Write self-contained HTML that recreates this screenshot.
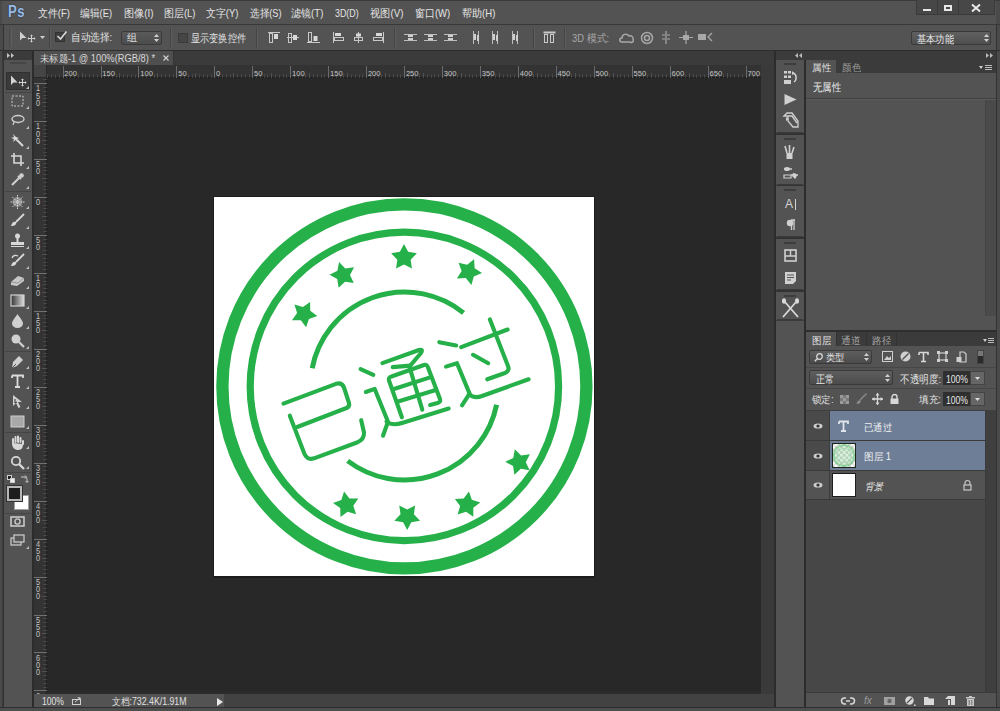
<!DOCTYPE html>
<html><head><meta charset="utf-8">
<style>
*{box-sizing:border-box}
html,body{margin:0;padding:0}
body{width:1000px;height:711px;overflow:hidden;background:#535353;position:relative;font-family:"Liberation Sans",sans-serif;color:#e6e6e6;font-size:11px}
.a{position:absolute}
.t{position:absolute;white-space:nowrap;line-height:1}
svg{overflow:visible}
</style></head><body>
<div class="a" style="left:0px;top:0px;width:1000px;height:711px;background:#4a4a4a;"></div>
<div class="a" style="left:996px;top:25px;width:1px;height:686px;background:#333;"></div>
<div class="a" style="left:2px;top:1px;width:994px;height:23px;background:#535353;"></div>
<div class="a" style="left:0px;top:0px;width:1000px;height:1px;background:#3a3a3a;"></div>
<div class="a" style="left:0px;top:24px;width:1000px;height:1px;background:#383838;"></div>
<div class="t" style="left:8.2px;top:4.2px;font-size:16px;color:#9ab9e2;transform:scaleX(0.8180);transform-origin:0 0;font-weight:bold;text-shadow:0 0 1.2px #1f3656,0 0 1px #1f3656;letter-spacing:0.6px">Ps</div>
<div class="t" style="left:38px;top:8px;font-size:10.5px;color:#e4e4e4;transform:scaleX(0.9034);transform-origin:0 0;">文件(F)</div>
<div class="t" style="left:80px;top:8px;font-size:10.5px;color:#e4e4e4;transform:scaleX(0.8889);transform-origin:0 0;">编辑(E)</div>
<div class="t" style="left:123.5px;top:8px;font-size:10.5px;color:#e4e4e4;transform:scaleX(0.9241);transform-origin:0 0;">图像(I)</div>
<div class="t" style="left:163.5px;top:8px;font-size:10.5px;color:#e4e4e4;transform:scaleX(0.9040);transform-origin:0 0;">图层(L)</div>
<div class="t" style="left:205.5px;top:8px;font-size:10.5px;color:#e4e4e4;transform:scaleX(0.9028);transform-origin:0 0;">文字(Y)</div>
<div class="t" style="left:249.5px;top:8px;font-size:10.5px;color:#e4e4e4;transform:scaleX(0.8750);transform-origin:0 0;">选择(S)</div>
<div class="t" style="left:291px;top:8px;font-size:10.5px;color:#e4e4e4;transform:scaleX(0.9147);transform-origin:0 0;">滤镜(T)</div>
<div class="t" style="left:335px;top:8px;font-size:10.5px;color:#e4e4e4;transform:scaleX(0.8429);transform-origin:0 0;">3D(D)</div>
<div class="t" style="left:370.3px;top:8px;font-size:10.5px;color:#e4e4e4;transform:scaleX(0.9278);transform-origin:0 0;">视图(V)</div>
<div class="t" style="left:415.4px;top:8px;font-size:10.5px;color:#e4e4e4;transform:scaleX(0.9047);transform-origin:0 0;">窗口(W)</div>
<div class="t" style="left:461.6px;top:8px;font-size:10.5px;color:#e4e4e4;transform:scaleX(0.9131);transform-origin:0 0;">帮助(H)</div>
<div class="a" style="left:916px;top:0px;width:79px;height:15px;background:#474747;border:1px solid #3a3a3a;border-top:none"></div>
<div class="a" style="left:937px;top:0px;width:1px;height:14px;background:#3a3a3a;"></div>
<div class="a" style="left:958px;top:0px;width:1px;height:14px;background:#3a3a3a;"></div>
<div class="a" style="left:923px;top:9px;width:8px;height:2px;background:#e8e8e8;"></div>
<div class="a" style="left:944px;top:5px;width:8px;height:6px;background:transparent;border:2px solid #e8e8e8"></div>
<svg class="a" style="left:971px;top:4px;" width="10" height="8" viewBox="0 0 10 8"><path d="M1 0.5 L9 7.5 M9 0.5 L1 7.5" stroke="#e8e8e8" stroke-width="2"/></svg>
<div class="a" style="left:4px;top:25px;width:992px;height:25px;background:#535353;"></div>
<div class="a" style="left:0px;top:50px;width:1000px;height:1px;background:#2e2e2e;"></div>
<div class="a" style="left:9px;top:29px;width:1px;height:18px;background:#484848;"></div>
<div class="a" style="left:11px;top:29px;width:1px;height:18px;background:#5e5e5e;"></div>
<svg class="a" style="left:19px;top:31px;" width="17" height="12" viewBox="0 0 17 12"><path d="M1 0.5 L1 9.5 L3.5 7 L7.5 7 Z" fill="#d0d0d0"/><path d="M9.5 7.5 H15.5 M12.5 4.5 V10.5" stroke="#d0d0d0" stroke-width="1"/><path d="M12.5 3.5 L11 5 H14Z M12.5 11.5 L11 10 H14Z M8.5 7.5 L10 6 V9Z M16.5 7.5 L15 6 V9Z" fill="#d0d0d0"/></svg>
<svg class="a" style="left:40px;top:36px;" width="6" height="3" viewBox="0 0 6 3"><path d="M0 0 H5 L2.5 3Z" fill="#cfcfcf"/></svg>
<div class="a" style="left:49px;top:28px;width:1px;height:20px;background:#444;"></div>
<div class="a" style="left:50px;top:28px;width:1px;height:20px;background:#5e5e5e;"></div>
<div class="a" style="left:55px;top:32px;width:10px;height:10px;background:#3e3e3e;border:1px solid #333"></div>
<svg class="a" style="left:56px;top:30px;" width="12" height="11" viewBox="0 0 12 11"><path d="M1.5 6 L4.5 9 L10.5 1.5" stroke="#d8d8d8" stroke-width="1.6" fill="none"/></svg>
<div class="t" style="left:70.5px;top:32px;font-size:10.5px;color:#e0e0e0;transform:scaleX(0.8738);transform-origin:0 0;">自动选择:</div>
<div class="a" style="left:121px;top:31px;width:41px;height:14px;background:#4f4f4f;border:1px solid #3a3a3a;border-radius:2px;background:linear-gradient(#5a5a5a,#4c4c4c)"></div>
<div class="t" style="left:126.5px;top:33px;font-size:10px;color:#e0e0e0;">组</div>
<svg class="a" style="left:154px;top:34px;" width="5" height="8" viewBox="0 0 5 8"><path d="M0 3 L2.5 0 L5 3Z M0 5 L2.5 8 L5 5Z" fill="#d0d0d0"/></svg>
<div class="a" style="left:170px;top:28px;width:1px;height:20px;background:#444;"></div>
<div class="a" style="left:171px;top:28px;width:1px;height:20px;background:#5e5e5e;"></div>
<div class="a" style="left:178px;top:33px;width:10px;height:10px;background:#464646;border:1px solid #3a3a3a"></div>
<div class="t" style="left:191.2px;top:32.5px;font-size:10.5px;color:#e0e0e0;transform:scaleX(0.8333);transform-origin:0 0;">显示变换控件</div>
<div class="a" style="left:256px;top:28px;width:1px;height:20px;background:#444;"></div>
<div class="a" style="left:257px;top:28px;width:1px;height:20px;background:#5e5e5e;"></div>
<svg class="a" style="left:268px;top:32px;" width="13" height="11" viewBox="0 0 13 11"><path d="M0 0.5 H12" stroke="#c8c8c8"/><rect x="1.5" y="1.5" width="3" height="9" fill="none" stroke="#c8c8c8"/><rect x="6" y="2" width="4" height="5" fill="#d8d8d8"/></svg>
<svg class="a" style="left:287px;top:32px;" width="13" height="11" viewBox="0 0 13 11"><path d="M0 5.5 H12" stroke="#c8c8c8"/><rect x="1.5" y="1.5" width="3" height="9" fill="none" stroke="#c8c8c8"/><rect x="6" y="3" width="4" height="5" fill="#d8d8d8"/></svg>
<svg class="a" style="left:307px;top:32px;" width="13" height="11" viewBox="0 0 13 11"><path d="M0 10.5 H13" stroke="#c8c8c8"/><rect x="1.5" y="0.5" width="3" height="9" fill="none" stroke="#c8c8c8"/><rect x="6.5" y="4" width="4" height="5" fill="#d8d8d8"/></svg>
<svg class="a" style="left:333px;top:32px;" width="13" height="11" viewBox="0 0 13 11"><path d="M0.5 0 V11" stroke="#c8c8c8"/><rect x="1.5" y="5.5" width="9" height="3" fill="none" stroke="#c8c8c8"/><rect x="2" y="1" width="6" height="3" fill="#d8d8d8"/></svg>
<svg class="a" style="left:353px;top:32px;" width="13" height="11" viewBox="0 0 13 11"><path d="M5.5 0 V11" stroke="#c8c8c8"/><rect x="1.5" y="5.5" width="8" height="3" fill="none" stroke="#c8c8c8"/><rect x="3" y="1.5" width="5" height="3" fill="#d8d8d8"/></svg>
<svg class="a" style="left:373px;top:32px;" width="13" height="11" viewBox="0 0 13 11"><path d="M10.5 0 V11" stroke="#c8c8c8"/><rect x="0.5" y="5.5" width="9" height="3" fill="none" stroke="#c8c8c8"/><rect x="3" y="1" width="6" height="3" fill="#d8d8d8"/></svg>
<div class="a" style="left:394px;top:28px;width:1px;height:20px;background:#444;"></div>
<div class="a" style="left:395px;top:28px;width:1px;height:20px;background:#5e5e5e;"></div>
<svg class="a" style="left:404px;top:32px;" width="13" height="11" viewBox="0 0 13 11"><path d="M0 2.5 H13 M0 8.5 H13" stroke="#bdbdbd"/><rect x="4" y="3" width="5" height="2" fill="#d0d0d0"/><rect x="4" y="6" width="5" height="2" fill="#d0d0d0"/></svg>
<svg class="a" style="left:424px;top:32px;" width="13" height="11" viewBox="0 0 13 11"><path d="M0 2.5 H13 M0 8.5 H13" stroke="#bdbdbd"/><rect x="4" y="3" width="5" height="2" fill="#d0d0d0"/><rect x="4" y="6" width="5" height="2" fill="#d0d0d0"/></svg>
<svg class="a" style="left:444px;top:32px;" width="13" height="11" viewBox="0 0 13 11"><path d="M0 2.5 H13 M0 8.5 H13" stroke="#bdbdbd"/><rect x="4" y="3" width="5" height="2" fill="#d0d0d0"/><rect x="4" y="6" width="5" height="2" fill="#d0d0d0"/></svg>
<svg class="a" style="left:471px;top:31px;" width="10" height="13" viewBox="0 0 10 13"><path d="M2.5 0 V13 M7.5 0 V13" stroke="#bdbdbd"/><rect x="3" y="3" width="2" height="6" fill="#d0d0d0"/><rect x="6" y="4" width="2" height="6" fill="#d0d0d0"/></svg>
<svg class="a" style="left:490px;top:31px;" width="10" height="13" viewBox="0 0 10 13"><path d="M2.5 0 V13 M7.5 0 V13" stroke="#bdbdbd"/><rect x="3" y="3" width="2" height="6" fill="#d0d0d0"/><rect x="6" y="4" width="2" height="6" fill="#d0d0d0"/></svg>
<svg class="a" style="left:510px;top:31px;" width="10" height="13" viewBox="0 0 10 13"><path d="M2.5 0 V13 M7.5 0 V13" stroke="#bdbdbd"/><rect x="3" y="3" width="2" height="6" fill="#d0d0d0"/><rect x="6" y="4" width="2" height="6" fill="#d0d0d0"/></svg>
<div class="a" style="left:533px;top:28px;width:1px;height:20px;background:#444;"></div>
<div class="a" style="left:534px;top:28px;width:1px;height:20px;background:#5e5e5e;"></div>
<svg class="a" style="left:543px;top:31px;" width="13" height="13" viewBox="0 0 13 13"><rect x="0.5" y="0.5" width="12" height="2" fill="#c8c8c8"/><rect x="1.5" y="3.5" width="3" height="8" fill="none" stroke="#c8c8c8"/><rect x="7.5" y="3.5" width="3" height="8" fill="none" stroke="#c8c8c8"/></svg>
<div class="a" style="left:564px;top:28px;width:1px;height:20px;background:#444;"></div>
<div class="a" style="left:565px;top:28px;width:1px;height:20px;background:#5e5e5e;"></div>
<div class="t" style="left:571.5px;top:33px;font-size:10.5px;color:#a8a8a8;transform:scaleX(0.8966);transform-origin:0 0;">3D 模式:</div>
<svg class="a" style="left:619px;top:31px;" width="16" height="13" viewBox="0 0 16 13"><path d="M3 11 C0 11 0 7 3 7 C3 3 8 2 10 5 C13 4 15 7 14 9 C15 11 13 12 11 11 Z" fill="none" stroke="#a8a8a8" stroke-width="1.5"/></svg>
<svg class="a" style="left:640px;top:31px;" width="14" height="14" viewBox="0 0 14 14"><circle cx="7" cy="7" r="5.5" fill="none" stroke="#a8a8a8" stroke-width="1.5"/><circle cx="7" cy="7" r="2.5" fill="none" stroke="#a8a8a8" stroke-width="1.5"/></svg>
<svg class="a" style="left:661px;top:31px;" width="10" height="13" viewBox="0 0 10 13"><path d="M5 0 V13 M1 4 H4 M6 4 H9 M1 8 H4 M6 8 H9" stroke="#a8a8a8" stroke-width="1.2"/></svg>
<svg class="a" style="left:679px;top:31px;" width="14" height="13" viewBox="0 0 14 13"><path d="M7 0 V13 M0 6.5 H14" stroke="#a8a8a8" stroke-width="1.2"/><rect x="4" y="4" width="6" height="5" fill="#a8a8a8"/></svg>
<svg class="a" style="left:698px;top:32px;" width="16" height="11" viewBox="0 0 16 11"><rect x="0" y="2" width="8" height="6" fill="#a8a8a8"/><path d="M14 1 L10 5 L14 9" fill="none" stroke="#a8a8a8" stroke-width="1.3"/></svg>
<div class="a" style="left:911px;top:31px;width:80px;height:14px;background:#5a5a5a;border:1px solid #393939;border-radius:2px;background:linear-gradient(#606060,#4e4e4e)"></div>
<div class="t" style="left:917px;top:33.5px;font-size:10.5px;color:#e6e6e6;transform:scaleX(0.8409);transform-origin:0 0;">基本功能</div>
<svg class="a" style="left:984px;top:34px;" width="5" height="8" viewBox="0 0 5 8"><path d="M0 3 L2.5 0 L5 3Z M0 5 L2.5 8 L5 5Z" fill="#d0d0d0"/></svg>
<div class="a" style="left:2px;top:51px;width:30px;height:657px;background:#3b3b3b;"></div>
<div class="a" style="left:4px;top:60px;width:28px;height:647px;background:#535353;"></div>
<div class="a" style="left:32px;top:51px;width:2px;height:657px;background:#2c2c2c;"></div>
<div class="a" style="left:3px;top:25px;width:1px;height:686px;background:#333;"></div>
<svg class="a" style="left:6.5px;top:53px;" width="9" height="5" viewBox="0 0 9 5"><path d="M0 0 L3 2.5 L0 5Z M4 0 L7 2.5 L4 5Z" fill="#c4c4c4"/></svg>
<div class="a" style="left:10px;top:62px;width:16px;height:2px;background:#464646;"></div>
<div class="a" style="left:6px;top:72px;width:24px;height:18px;background:#3a3a3a;border:1px solid #303030"></div>
<svg class="a" style="left:10px;top:75px;" width="16" height="13" viewBox="0 0 16 13"><path d="M1 0.5 L1 10 L3.5 7.5 L7.5 7.5 Z" fill="#d4d4d4"/><path d="M9.5 7.5 H15.5 M12.5 4.5 V10.5" stroke="#d4d4d4" stroke-width="1"/><path d="M12.5 3.5 L11 5 H14Z M12.5 11.5 L11 10 H14Z M8.5 7.5 L10 6 V9Z M16.5 7.5 L15 6 V9Z" fill="#d4d4d4"/></svg>
<svg class="a" style="left:26px;top:86px;" width="3" height="3" viewBox="0 0 3 3"><path d="M3 0 V3 H0Z" fill="#bdbdbd"/></svg>
<div class="a" style="left:5px;top:92px;width:26px;height:1px;background:#444;"></div>
<svg class="a" style="left:11px;top:95px;" width="13" height="12" viewBox="0 0 13 12"><rect x="1" y="1" width="11" height="10" fill="none" stroke="#cfcfcf" stroke-dasharray="2 1.5"/></svg>
<svg class="a" style="left:26px;top:106px;" width="3" height="3" viewBox="0 0 3 3"><path d="M3 0 V3 H0Z" fill="#bdbdbd"/></svg>
<svg class="a" style="left:10px;top:114px;" width="15" height="12" viewBox="0 0 15 12"><ellipse cx="8" cy="5" rx="6" ry="3.5" fill="none" stroke="#cfcfcf" stroke-width="1.4"/><path d="M4 8 L3 11" stroke="#cfcfcf" stroke-width="1.2"/></svg>
<svg class="a" style="left:26px;top:126px;" width="3" height="3" viewBox="0 0 3 3"><path d="M3 0 V3 H0Z" fill="#bdbdbd"/></svg>
<svg class="a" style="left:10px;top:133px;" width="15" height="15" viewBox="0 0 15 15"><path d="M3 1 L4 4 L1 5 L4 6 L3 9 L5.5 7 L8 9 L7 6 L9 5 L6 4Z" fill="#d8d8d8"/><path d="M7 7 L13 13" stroke="#d8d8d8" stroke-width="2"/></svg>
<svg class="a" style="left:26px;top:146px;" width="3" height="3" viewBox="0 0 3 3"><path d="M3 0 V3 H0Z" fill="#bdbdbd"/></svg>
<svg class="a" style="left:11px;top:153px;" width="14" height="14" viewBox="0 0 14 14"><path d="M3 0 V10 H13 M0 3 H10 V13" fill="none" stroke="#d8d8d8" stroke-width="1.6"/></svg>
<svg class="a" style="left:26px;top:166px;" width="3" height="3" viewBox="0 0 3 3"><path d="M3 0 V3 H0Z" fill="#bdbdbd"/></svg>
<svg class="a" style="left:10px;top:172px;" width="15" height="15" viewBox="0 0 15 15"><path d="M2 13 L9 6 M8 4 L11 7" stroke="#d0d0d0" stroke-width="2"/><circle cx="11.5" cy="3.5" r="2.3" fill="#d0d0d0"/></svg>
<svg class="a" style="left:26px;top:186px;" width="3" height="3" viewBox="0 0 3 3"><path d="M3 0 V3 H0Z" fill="#bdbdbd"/></svg>
<div class="a" style="left:5px;top:191px;width:26px;height:1px;background:#444;"></div>
<svg class="a" style="left:10px;top:195px;" width="15" height="14" viewBox="0 0 15 14"><circle cx="7.5" cy="7" r="5" fill="#909090"/><path d="M7.5 0 V14 M0.5 7 H14.5 M2.5 2 L12.5 12 M12.5 2 L2.5 12" stroke="#d8d8d8" stroke-width="1" stroke-dasharray="1.5 1"/></svg>
<svg class="a" style="left:26px;top:206px;" width="3" height="3" viewBox="0 0 3 3"><path d="M3 0 V3 H0Z" fill="#bdbdbd"/></svg>
<svg class="a" style="left:10px;top:213px;" width="15" height="14" viewBox="0 0 15 14"><path d="M14 1 L6 9" stroke="#d8d8d8" stroke-width="1.8"/><path d="M1 13 C2 9 4 8 6 9 C7 11 5 13 1 13Z" fill="#d8d8d8"/></svg>
<svg class="a" style="left:26px;top:226px;" width="3" height="3" viewBox="0 0 3 3"><path d="M3 0 V3 H0Z" fill="#bdbdbd"/></svg>
<svg class="a" style="left:10px;top:233px;" width="15" height="15" viewBox="0 0 15 15"><circle cx="7.5" cy="3" r="2.5" fill="#d8d8d8"/><rect x="6.5" y="4" width="2" height="5" fill="#d8d8d8"/><rect x="1" y="9" width="13" height="3" fill="#d8d8d8"/><rect x="1" y="13" width="13" height="1" fill="#d8d8d8"/></svg>
<svg class="a" style="left:26px;top:246px;" width="3" height="3" viewBox="0 0 3 3"><path d="M3 0 V3 H0Z" fill="#bdbdbd"/></svg>
<svg class="a" style="left:10px;top:253px;" width="15" height="15" viewBox="0 0 15 15"><path d="M14 1 L6 9" stroke="#d8d8d8" stroke-width="1.8"/><path d="M1 13 C2 9 4 8 6 9 C7 11 5 13 1 13Z" fill="#d8d8d8"/><path d="M2 5 C3 2 6 2 8 3" fill="none" stroke="#d8d8d8" stroke-width="1.3"/></svg>
<svg class="a" style="left:26px;top:266px;" width="3" height="3" viewBox="0 0 3 3"><path d="M3 0 V3 H0Z" fill="#bdbdbd"/></svg>
<svg class="a" style="left:10px;top:274px;" width="15" height="13" viewBox="0 0 15 13"><path d="M1 8 L8 2 L14 4 L14 7 L7 12 L1 11Z" fill="#c8c8c8"/><path d="M1 8 L8 9 L14 4" fill="none" stroke="#888" stroke-width="0.8"/></svg>
<svg class="a" style="left:26px;top:286px;" width="3" height="3" viewBox="0 0 3 3"><path d="M3 0 V3 H0Z" fill="#bdbdbd"/></svg>
<svg class="a" style="left:10px;top:294px;" width="15" height="13" viewBox="0 0 15 13"><defs><linearGradient id="gg" x1="0" x2="1"><stop offset="0" stop-color="#333"/><stop offset="1" stop-color="#ddd"/></linearGradient></defs><rect x="1" y="1" width="13" height="11" fill="url(#gg)" stroke="#d0d0d0" stroke-width="1.2"/></svg>
<svg class="a" style="left:26px;top:306px;" width="3" height="3" viewBox="0 0 3 3"><path d="M3 0 V3 H0Z" fill="#bdbdbd"/></svg>
<svg class="a" style="left:11px;top:313px;" width="13" height="15" viewBox="0 0 13 15"><path d="M6.5 1 C9 5 12 8 12 10.5 A5.5 4.5 0 0 1 1 10.5 C1 8 4 5 6.5 1Z" fill="#d0d0d0"/></svg>
<svg class="a" style="left:26px;top:326px;" width="3" height="3" viewBox="0 0 3 3"><path d="M3 0 V3 H0Z" fill="#bdbdbd"/></svg>
<svg class="a" style="left:10px;top:333px;" width="15" height="15" viewBox="0 0 15 15"><circle cx="6" cy="6" r="4.5" fill="#d0d0d0"/><path d="M9 9 L14 14" stroke="#d0d0d0" stroke-width="2.2"/></svg>
<svg class="a" style="left:26px;top:346px;" width="3" height="3" viewBox="0 0 3 3"><path d="M3 0 V3 H0Z" fill="#bdbdbd"/></svg>
<div class="a" style="left:5px;top:351px;width:26px;height:1px;background:#444;"></div>
<svg class="a" style="left:10px;top:354px;" width="15" height="15" viewBox="0 0 15 15"><path d="M2 14 L3 8 L9 2 L13 6 L7 12Z" fill="#d0d0d0"/><path d="M2 14 L6 10" stroke="#555" stroke-width="1"/></svg>
<svg class="a" style="left:26px;top:366px;" width="3" height="3" viewBox="0 0 3 3"><path d="M3 0 V3 H0Z" fill="#bdbdbd"/></svg>
<svg class="a" style="left:11px;top:374px;" width="13" height="14" viewBox="0 0 13 14"><path d="M1 1.5 H12 V4 M1 1.5 V4 M6.5 1.5 V13 M4 13 H9" fill="none" stroke="#dcdcdc" stroke-width="1.8"/></svg>
<svg class="a" style="left:26px;top:386px;" width="3" height="3" viewBox="0 0 3 3"><path d="M3 0 V3 H0Z" fill="#bdbdbd"/></svg>
<svg class="a" style="left:11px;top:394px;" width="13" height="15" viewBox="0 0 13 15"><path d="M2 1 L2 12 L5 9 L7.5 14 L9.5 13 L7 8 L11 8Z" fill="#d0d0d0"/><path d="M4 5 L4 9 L6 8" stroke="#333" stroke-width="1" fill="none"/></svg>
<svg class="a" style="left:26px;top:406px;" width="3" height="3" viewBox="0 0 3 3"><path d="M3 0 V3 H0Z" fill="#bdbdbd"/></svg>
<svg class="a" style="left:10px;top:415px;" width="15" height="13" viewBox="0 0 15 13"><rect x="1" y="1" width="13" height="11" fill="#a8a8a8" stroke="#d0d0d0" stroke-width="1"/></svg>
<svg class="a" style="left:26px;top:426px;" width="3" height="3" viewBox="0 0 3 3"><path d="M3 0 V3 H0Z" fill="#bdbdbd"/></svg>
<div class="a" style="left:5px;top:432px;width:26px;height:1px;background:#444;"></div>
<svg class="a" style="left:10px;top:435px;" width="15" height="15" viewBox="0 0 15 15"><path d="M3 8 L3 4 M5.5 7 L5.5 2 M8 7 L8 1.5 M10.5 7 L10.5 3 M13 9 L13 6" stroke="#d8d8d8" stroke-width="2" stroke-linecap="round"/><path d="M2 8 C2 13 5 15 8 15 C12 15 13 12 13 9 L3 8Z" fill="#d8d8d8"/></svg>
<svg class="a" style="left:26px;top:446px;" width="3" height="3" viewBox="0 0 3 3"><path d="M3 0 V3 H0Z" fill="#bdbdbd"/></svg>
<svg class="a" style="left:10px;top:455px;" width="15" height="15" viewBox="0 0 15 15"><circle cx="6" cy="6" r="4.2" fill="none" stroke="#d8d8d8" stroke-width="1.8"/><path d="M9 9 L14 14" stroke="#d8d8d8" stroke-width="2.4"/></svg>
<svg class="a" style="left:26px;top:466px;" width="3" height="3" viewBox="0 0 3 3"><path d="M3 0 V3 H0Z" fill="#bdbdbd"/></svg>
<div class="a" style="left:5px;top:472px;width:26px;height:1px;background:#444;"></div>
<svg class="a" style="left:7px;top:475px;" width="8" height="8" viewBox="0 0 8 8"><rect x="0.5" y="0.5" width="4" height="4" fill="#222" stroke="#ccc"/><rect x="3.5" y="3.5" width="4" height="4" fill="#eee" stroke="#ccc"/></svg>
<svg class="a" style="left:20px;top:475px;" width="8" height="8" viewBox="0 0 8 8"><path d="M1 2 H5 C6.5 2 7 3 7 4.5 V7 M5 0.5 L6.5 2 L5 3.5 M5.5 6 L7 7.5 L8.5 6" fill="none" stroke="#ccc" stroke-width="1"/></svg>
<div class="a" style="left:14px;top:495px;width:15px;height:15px;background:#ffffff;border:1px solid #a0a0a0"></div>
<div class="a" style="left:7px;top:486px;width:15px;height:15px;background:#1e1e1e;border:2px solid #b8b8b8"></div>
<div class="a" style="left:6px;top:485px;width:17px;height:17px;background:transparent;border:1px solid #333"></div>
<div class="a" style="left:5px;top:513px;width:26px;height:1px;background:#444;"></div>
<svg class="a" style="left:10px;top:516px;" width="15" height="11" viewBox="0 0 15 11"><rect x="1" y="1" width="13" height="9" fill="none" stroke="#cfcfcf" stroke-width="1.5"/><circle cx="7.5" cy="5.5" r="2.6" fill="none" stroke="#cfcfcf" stroke-width="1.3"/></svg>
<svg class="a" style="left:10px;top:534px;" width="16" height="13" viewBox="0 0 16 13"><rect x="1" y="4" width="10" height="7" fill="#585858" stroke="#cfcfcf" stroke-width="1.2"/><rect x="4" y="1" width="10" height="7" fill="#585858" stroke="#cfcfcf" stroke-width="1.2"/></svg>
<svg class="a" style="left:26px;top:546px;" width="3" height="3" viewBox="0 0 3 3"><path d="M3 0 V3 H0Z" fill="#bdbdbd"/></svg>
<div class="a" style="left:34px;top:51px;width:740px;height:14px;background:#3b3b3b;"></div>
<div class="a" style="left:34px;top:51px;width:140px;height:14px;background:#4f4f4f;"></div>
<div class="a" style="left:173px;top:51px;width:1px;height:14px;background:#333;"></div>
<div class="t" style="left:40px;top:54px;font-size:10px;color:#d8d8d8;transform:scaleX(0.9311);transform-origin:0 0;">未标题-1 @ 100%(RGB/8) *</div>
<svg class="a" style="left:163px;top:55px;" width="6" height="6" viewBox="0 0 6 6"><path d="M0.5 0.5 L5.5 5.5 M5.5 0.5 L0.5 5.5" stroke="#cfcfcf" stroke-width="1.2"/></svg>
<div class="a" style="left:34px;top:65px;width:727px;height:13px;background:#333333;"></div>
<div class="a" style="left:34px;top:65px;width:13px;height:629px;background:#333333;"></div>
<div class="a" style="left:34px;top:65px;width:13px;height:13px;background:#454545;border-right:1px solid #2a2a2a;border-bottom:1px solid #2a2a2a"></div>
<div class="a" style="left:47px;top:77px;width:714px;height:1px;background:#1c1c1c;"></div>
<div class="a" style="left:46px;top:78px;width:1px;height:616px;background:#1c1c1c;"></div>
<div class="a" style="left:47.3px;top:74px;width:1px;height:4px;background:#464646"></div>
<div class="a" style="left:51.1px;top:74px;width:1px;height:4px;background:#464646"></div>
<div class="a" style="left:54.9px;top:74px;width:1px;height:4px;background:#464646"></div>
<div class="a" style="left:58.7px;top:74px;width:1px;height:4px;background:#464646"></div>
<div class="a" style="left:62.5px;top:66px;width:1px;height:12px;background:#6a6a6a"></div>
<div class="a" style="left:66.3px;top:74px;width:1px;height:4px;background:#464646"></div>
<div class="a" style="left:70.1px;top:74px;width:1px;height:4px;background:#464646"></div>
<div class="a" style="left:73.9px;top:74px;width:1px;height:4px;background:#464646"></div>
<div class="a" style="left:77.7px;top:74px;width:1px;height:4px;background:#464646"></div>
<div class="a" style="left:81.5px;top:73px;width:1px;height:5px;background:#505050"></div>
<div class="a" style="left:85.3px;top:74px;width:1px;height:4px;background:#464646"></div>
<div class="a" style="left:89.1px;top:74px;width:1px;height:4px;background:#464646"></div>
<div class="a" style="left:92.9px;top:74px;width:1px;height:4px;background:#464646"></div>
<div class="a" style="left:96.7px;top:74px;width:1px;height:4px;background:#464646"></div>
<div class="t" style="left:64.3px;top:70px;font-size:7.6px;color:#c4c4c4">200</div>
<div class="a" style="left:100.5px;top:66px;width:1px;height:12px;background:#6a6a6a"></div>
<div class="a" style="left:104.2px;top:74px;width:1px;height:4px;background:#464646"></div>
<div class="a" style="left:108.0px;top:74px;width:1px;height:4px;background:#464646"></div>
<div class="a" style="left:111.8px;top:74px;width:1px;height:4px;background:#464646"></div>
<div class="a" style="left:115.6px;top:74px;width:1px;height:4px;background:#464646"></div>
<div class="a" style="left:119.4px;top:73px;width:1px;height:5px;background:#505050"></div>
<div class="a" style="left:123.2px;top:74px;width:1px;height:4px;background:#464646"></div>
<div class="a" style="left:127.0px;top:74px;width:1px;height:4px;background:#464646"></div>
<div class="a" style="left:130.8px;top:74px;width:1px;height:4px;background:#464646"></div>
<div class="a" style="left:134.6px;top:74px;width:1px;height:4px;background:#464646"></div>
<div class="t" style="left:102.2px;top:70px;font-size:7.6px;color:#c4c4c4">150</div>
<div class="a" style="left:138.4px;top:66px;width:1px;height:12px;background:#6a6a6a"></div>
<div class="a" style="left:142.2px;top:74px;width:1px;height:4px;background:#464646"></div>
<div class="a" style="left:146.0px;top:74px;width:1px;height:4px;background:#464646"></div>
<div class="a" style="left:149.8px;top:74px;width:1px;height:4px;background:#464646"></div>
<div class="a" style="left:153.6px;top:74px;width:1px;height:4px;background:#464646"></div>
<div class="a" style="left:157.4px;top:73px;width:1px;height:5px;background:#505050"></div>
<div class="a" style="left:161.2px;top:74px;width:1px;height:4px;background:#464646"></div>
<div class="a" style="left:165.0px;top:74px;width:1px;height:4px;background:#464646"></div>
<div class="a" style="left:168.8px;top:74px;width:1px;height:4px;background:#464646"></div>
<div class="a" style="left:172.6px;top:74px;width:1px;height:4px;background:#464646"></div>
<div class="t" style="left:140.2px;top:70px;font-size:7.6px;color:#c4c4c4">100</div>
<div class="a" style="left:176.4px;top:66px;width:1px;height:12px;background:#6a6a6a"></div>
<div class="a" style="left:180.1px;top:74px;width:1px;height:4px;background:#464646"></div>
<div class="a" style="left:183.9px;top:74px;width:1px;height:4px;background:#464646"></div>
<div class="a" style="left:187.7px;top:74px;width:1px;height:4px;background:#464646"></div>
<div class="a" style="left:191.5px;top:74px;width:1px;height:4px;background:#464646"></div>
<div class="a" style="left:195.3px;top:73px;width:1px;height:5px;background:#505050"></div>
<div class="a" style="left:199.1px;top:74px;width:1px;height:4px;background:#464646"></div>
<div class="a" style="left:202.9px;top:74px;width:1px;height:4px;background:#464646"></div>
<div class="a" style="left:206.7px;top:74px;width:1px;height:4px;background:#464646"></div>
<div class="a" style="left:210.5px;top:74px;width:1px;height:4px;background:#464646"></div>
<div class="t" style="left:178.2px;top:70px;font-size:7.6px;color:#c4c4c4">50</div>
<div class="a" style="left:214.3px;top:66px;width:1px;height:12px;background:#6a6a6a"></div>
<div class="a" style="left:218.1px;top:74px;width:1px;height:4px;background:#464646"></div>
<div class="a" style="left:221.9px;top:74px;width:1px;height:4px;background:#464646"></div>
<div class="a" style="left:225.7px;top:74px;width:1px;height:4px;background:#464646"></div>
<div class="a" style="left:229.5px;top:74px;width:1px;height:4px;background:#464646"></div>
<div class="a" style="left:233.3px;top:73px;width:1px;height:5px;background:#505050"></div>
<div class="a" style="left:237.1px;top:74px;width:1px;height:4px;background:#464646"></div>
<div class="a" style="left:240.9px;top:74px;width:1px;height:4px;background:#464646"></div>
<div class="a" style="left:244.7px;top:74px;width:1px;height:4px;background:#464646"></div>
<div class="a" style="left:248.5px;top:74px;width:1px;height:4px;background:#464646"></div>
<div class="t" style="left:216.1px;top:70px;font-size:7.6px;color:#c4c4c4">0</div>
<div class="a" style="left:252.2px;top:66px;width:1px;height:12px;background:#6a6a6a"></div>
<div class="a" style="left:256.0px;top:74px;width:1px;height:4px;background:#464646"></div>
<div class="a" style="left:259.8px;top:74px;width:1px;height:4px;background:#464646"></div>
<div class="a" style="left:263.6px;top:74px;width:1px;height:4px;background:#464646"></div>
<div class="a" style="left:267.4px;top:74px;width:1px;height:4px;background:#464646"></div>
<div class="a" style="left:271.2px;top:73px;width:1px;height:5px;background:#505050"></div>
<div class="a" style="left:275.0px;top:74px;width:1px;height:4px;background:#464646"></div>
<div class="a" style="left:278.8px;top:74px;width:1px;height:4px;background:#464646"></div>
<div class="a" style="left:282.6px;top:74px;width:1px;height:4px;background:#464646"></div>
<div class="a" style="left:286.4px;top:74px;width:1px;height:4px;background:#464646"></div>
<div class="t" style="left:254.1px;top:70px;font-size:7.6px;color:#c4c4c4">50</div>
<div class="a" style="left:290.2px;top:66px;width:1px;height:12px;background:#6a6a6a"></div>
<div class="a" style="left:294.0px;top:74px;width:1px;height:4px;background:#464646"></div>
<div class="a" style="left:297.8px;top:74px;width:1px;height:4px;background:#464646"></div>
<div class="a" style="left:301.6px;top:74px;width:1px;height:4px;background:#464646"></div>
<div class="a" style="left:305.4px;top:74px;width:1px;height:4px;background:#464646"></div>
<div class="a" style="left:309.2px;top:73px;width:1px;height:5px;background:#505050"></div>
<div class="a" style="left:313.0px;top:74px;width:1px;height:4px;background:#464646"></div>
<div class="a" style="left:316.8px;top:74px;width:1px;height:4px;background:#464646"></div>
<div class="a" style="left:320.6px;top:74px;width:1px;height:4px;background:#464646"></div>
<div class="a" style="left:324.4px;top:74px;width:1px;height:4px;background:#464646"></div>
<div class="t" style="left:292.0px;top:70px;font-size:7.6px;color:#c4c4c4">100</div>
<div class="a" style="left:328.2px;top:66px;width:1px;height:12px;background:#6a6a6a"></div>
<div class="a" style="left:331.9px;top:74px;width:1px;height:4px;background:#464646"></div>
<div class="a" style="left:335.7px;top:74px;width:1px;height:4px;background:#464646"></div>
<div class="a" style="left:339.5px;top:74px;width:1px;height:4px;background:#464646"></div>
<div class="a" style="left:343.3px;top:74px;width:1px;height:4px;background:#464646"></div>
<div class="a" style="left:347.1px;top:73px;width:1px;height:5px;background:#505050"></div>
<div class="a" style="left:350.9px;top:74px;width:1px;height:4px;background:#464646"></div>
<div class="a" style="left:354.7px;top:74px;width:1px;height:4px;background:#464646"></div>
<div class="a" style="left:358.5px;top:74px;width:1px;height:4px;background:#464646"></div>
<div class="a" style="left:362.3px;top:74px;width:1px;height:4px;background:#464646"></div>
<div class="t" style="left:330.0px;top:70px;font-size:7.6px;color:#c4c4c4">150</div>
<div class="a" style="left:366.1px;top:66px;width:1px;height:12px;background:#6a6a6a"></div>
<div class="a" style="left:369.9px;top:74px;width:1px;height:4px;background:#464646"></div>
<div class="a" style="left:373.7px;top:74px;width:1px;height:4px;background:#464646"></div>
<div class="a" style="left:377.5px;top:74px;width:1px;height:4px;background:#464646"></div>
<div class="a" style="left:381.3px;top:74px;width:1px;height:4px;background:#464646"></div>
<div class="a" style="left:385.1px;top:73px;width:1px;height:5px;background:#505050"></div>
<div class="a" style="left:388.9px;top:74px;width:1px;height:4px;background:#464646"></div>
<div class="a" style="left:392.7px;top:74px;width:1px;height:4px;background:#464646"></div>
<div class="a" style="left:396.5px;top:74px;width:1px;height:4px;background:#464646"></div>
<div class="a" style="left:400.3px;top:74px;width:1px;height:4px;background:#464646"></div>
<div class="t" style="left:367.9px;top:70px;font-size:7.6px;color:#c4c4c4">200</div>
<div class="a" style="left:404.1px;top:66px;width:1px;height:12px;background:#6a6a6a"></div>
<div class="a" style="left:407.8px;top:74px;width:1px;height:4px;background:#464646"></div>
<div class="a" style="left:411.6px;top:74px;width:1px;height:4px;background:#464646"></div>
<div class="a" style="left:415.4px;top:74px;width:1px;height:4px;background:#464646"></div>
<div class="a" style="left:419.2px;top:74px;width:1px;height:4px;background:#464646"></div>
<div class="a" style="left:423.0px;top:73px;width:1px;height:5px;background:#505050"></div>
<div class="a" style="left:426.8px;top:74px;width:1px;height:4px;background:#464646"></div>
<div class="a" style="left:430.6px;top:74px;width:1px;height:4px;background:#464646"></div>
<div class="a" style="left:434.4px;top:74px;width:1px;height:4px;background:#464646"></div>
<div class="a" style="left:438.2px;top:74px;width:1px;height:4px;background:#464646"></div>
<div class="t" style="left:405.9px;top:70px;font-size:7.6px;color:#c4c4c4">250</div>
<div class="a" style="left:442.0px;top:66px;width:1px;height:12px;background:#6a6a6a"></div>
<div class="a" style="left:445.8px;top:74px;width:1px;height:4px;background:#464646"></div>
<div class="a" style="left:449.6px;top:74px;width:1px;height:4px;background:#464646"></div>
<div class="a" style="left:453.4px;top:74px;width:1px;height:4px;background:#464646"></div>
<div class="a" style="left:457.2px;top:74px;width:1px;height:4px;background:#464646"></div>
<div class="a" style="left:461.0px;top:73px;width:1px;height:5px;background:#505050"></div>
<div class="a" style="left:464.8px;top:74px;width:1px;height:4px;background:#464646"></div>
<div class="a" style="left:468.6px;top:74px;width:1px;height:4px;background:#464646"></div>
<div class="a" style="left:472.4px;top:74px;width:1px;height:4px;background:#464646"></div>
<div class="a" style="left:476.2px;top:74px;width:1px;height:4px;background:#464646"></div>
<div class="t" style="left:443.8px;top:70px;font-size:7.6px;color:#c4c4c4">300</div>
<div class="a" style="left:480.0px;top:66px;width:1px;height:12px;background:#6a6a6a"></div>
<div class="a" style="left:483.7px;top:74px;width:1px;height:4px;background:#464646"></div>
<div class="a" style="left:487.5px;top:74px;width:1px;height:4px;background:#464646"></div>
<div class="a" style="left:491.3px;top:74px;width:1px;height:4px;background:#464646"></div>
<div class="a" style="left:495.1px;top:74px;width:1px;height:4px;background:#464646"></div>
<div class="a" style="left:498.9px;top:73px;width:1px;height:5px;background:#505050"></div>
<div class="a" style="left:502.7px;top:74px;width:1px;height:4px;background:#464646"></div>
<div class="a" style="left:506.5px;top:74px;width:1px;height:4px;background:#464646"></div>
<div class="a" style="left:510.3px;top:74px;width:1px;height:4px;background:#464646"></div>
<div class="a" style="left:514.1px;top:74px;width:1px;height:4px;background:#464646"></div>
<div class="t" style="left:481.8px;top:70px;font-size:7.6px;color:#c4c4c4">350</div>
<div class="a" style="left:517.9px;top:66px;width:1px;height:12px;background:#6a6a6a"></div>
<div class="a" style="left:521.7px;top:74px;width:1px;height:4px;background:#464646"></div>
<div class="a" style="left:525.5px;top:74px;width:1px;height:4px;background:#464646"></div>
<div class="a" style="left:529.3px;top:74px;width:1px;height:4px;background:#464646"></div>
<div class="a" style="left:533.1px;top:74px;width:1px;height:4px;background:#464646"></div>
<div class="a" style="left:536.9px;top:73px;width:1px;height:5px;background:#505050"></div>
<div class="a" style="left:540.7px;top:74px;width:1px;height:4px;background:#464646"></div>
<div class="a" style="left:544.5px;top:74px;width:1px;height:4px;background:#464646"></div>
<div class="a" style="left:548.3px;top:74px;width:1px;height:4px;background:#464646"></div>
<div class="a" style="left:552.1px;top:74px;width:1px;height:4px;background:#464646"></div>
<div class="t" style="left:519.7px;top:70px;font-size:7.6px;color:#c4c4c4">400</div>
<div class="a" style="left:555.9px;top:66px;width:1px;height:12px;background:#6a6a6a"></div>
<div class="a" style="left:559.6px;top:74px;width:1px;height:4px;background:#464646"></div>
<div class="a" style="left:563.4px;top:74px;width:1px;height:4px;background:#464646"></div>
<div class="a" style="left:567.2px;top:74px;width:1px;height:4px;background:#464646"></div>
<div class="a" style="left:571.0px;top:74px;width:1px;height:4px;background:#464646"></div>
<div class="a" style="left:574.8px;top:73px;width:1px;height:5px;background:#505050"></div>
<div class="a" style="left:578.6px;top:74px;width:1px;height:4px;background:#464646"></div>
<div class="a" style="left:582.4px;top:74px;width:1px;height:4px;background:#464646"></div>
<div class="a" style="left:586.2px;top:74px;width:1px;height:4px;background:#464646"></div>
<div class="a" style="left:590.0px;top:74px;width:1px;height:4px;background:#464646"></div>
<div class="t" style="left:557.6px;top:70px;font-size:7.6px;color:#c4c4c4">450</div>
<div class="a" style="left:593.8px;top:66px;width:1px;height:12px;background:#6a6a6a"></div>
<div class="a" style="left:597.6px;top:74px;width:1px;height:4px;background:#464646"></div>
<div class="a" style="left:601.4px;top:74px;width:1px;height:4px;background:#464646"></div>
<div class="a" style="left:605.2px;top:74px;width:1px;height:4px;background:#464646"></div>
<div class="a" style="left:609.0px;top:74px;width:1px;height:4px;background:#464646"></div>
<div class="a" style="left:612.8px;top:73px;width:1px;height:5px;background:#505050"></div>
<div class="a" style="left:616.6px;top:74px;width:1px;height:4px;background:#464646"></div>
<div class="a" style="left:620.4px;top:74px;width:1px;height:4px;background:#464646"></div>
<div class="a" style="left:624.2px;top:74px;width:1px;height:4px;background:#464646"></div>
<div class="a" style="left:628.0px;top:74px;width:1px;height:4px;background:#464646"></div>
<div class="t" style="left:595.6px;top:70px;font-size:7.6px;color:#c4c4c4">500</div>
<div class="a" style="left:631.8px;top:66px;width:1px;height:12px;background:#6a6a6a"></div>
<div class="a" style="left:635.5px;top:74px;width:1px;height:4px;background:#464646"></div>
<div class="a" style="left:639.3px;top:74px;width:1px;height:4px;background:#464646"></div>
<div class="a" style="left:643.1px;top:74px;width:1px;height:4px;background:#464646"></div>
<div class="a" style="left:646.9px;top:74px;width:1px;height:4px;background:#464646"></div>
<div class="a" style="left:650.7px;top:73px;width:1px;height:5px;background:#505050"></div>
<div class="a" style="left:654.5px;top:74px;width:1px;height:4px;background:#464646"></div>
<div class="a" style="left:658.3px;top:74px;width:1px;height:4px;background:#464646"></div>
<div class="a" style="left:662.1px;top:74px;width:1px;height:4px;background:#464646"></div>
<div class="a" style="left:665.9px;top:74px;width:1px;height:4px;background:#464646"></div>
<div class="t" style="left:633.5px;top:70px;font-size:7.6px;color:#c4c4c4">550</div>
<div class="a" style="left:669.7px;top:66px;width:1px;height:12px;background:#6a6a6a"></div>
<div class="a" style="left:673.5px;top:74px;width:1px;height:4px;background:#464646"></div>
<div class="a" style="left:677.3px;top:74px;width:1px;height:4px;background:#464646"></div>
<div class="a" style="left:681.1px;top:74px;width:1px;height:4px;background:#464646"></div>
<div class="a" style="left:684.9px;top:74px;width:1px;height:4px;background:#464646"></div>
<div class="a" style="left:688.7px;top:73px;width:1px;height:5px;background:#505050"></div>
<div class="a" style="left:692.5px;top:74px;width:1px;height:4px;background:#464646"></div>
<div class="a" style="left:696.3px;top:74px;width:1px;height:4px;background:#464646"></div>
<div class="a" style="left:700.1px;top:74px;width:1px;height:4px;background:#464646"></div>
<div class="a" style="left:703.9px;top:74px;width:1px;height:4px;background:#464646"></div>
<div class="t" style="left:671.5px;top:70px;font-size:7.6px;color:#c4c4c4">600</div>
<div class="a" style="left:707.7px;top:66px;width:1px;height:12px;background:#6a6a6a"></div>
<div class="a" style="left:711.4px;top:74px;width:1px;height:4px;background:#464646"></div>
<div class="a" style="left:715.2px;top:74px;width:1px;height:4px;background:#464646"></div>
<div class="a" style="left:719.0px;top:74px;width:1px;height:4px;background:#464646"></div>
<div class="a" style="left:722.8px;top:74px;width:1px;height:4px;background:#464646"></div>
<div class="a" style="left:726.6px;top:73px;width:1px;height:5px;background:#505050"></div>
<div class="a" style="left:730.4px;top:74px;width:1px;height:4px;background:#464646"></div>
<div class="a" style="left:734.2px;top:74px;width:1px;height:4px;background:#464646"></div>
<div class="a" style="left:738.0px;top:74px;width:1px;height:4px;background:#464646"></div>
<div class="a" style="left:741.8px;top:74px;width:1px;height:4px;background:#464646"></div>
<div class="t" style="left:709.5px;top:70px;font-size:7.6px;color:#c4c4c4">650</div>
<div class="a" style="left:745.6px;top:66px;width:1px;height:12px;background:#6a6a6a"></div>
<div class="a" style="left:749.4px;top:74px;width:1px;height:4px;background:#464646"></div>
<div class="a" style="left:753.2px;top:74px;width:1px;height:4px;background:#464646"></div>
<div class="a" style="left:757.0px;top:74px;width:1px;height:4px;background:#464646"></div>
<div class="t" style="left:747.4px;top:70px;font-size:7.6px;color:#c4c4c4">700</div>
<div class="a" style="left:43px;top:79.4px;width:4px;height:1px;background:#464646"></div>
<div class="a" style="left:34px;top:83.1px;width:13px;height:1px;background:#707070"></div>
<div class="a" style="left:43px;top:86.9px;width:4px;height:1px;background:#464646"></div>
<div class="a" style="left:43px;top:90.7px;width:4px;height:1px;background:#464646"></div>
<div class="a" style="left:43px;top:94.5px;width:4px;height:1px;background:#464646"></div>
<div class="a" style="left:43px;top:98.3px;width:4px;height:1px;background:#464646"></div>
<div class="a" style="left:42px;top:102.1px;width:5px;height:1px;background:#505050"></div>
<div class="a" style="left:43px;top:105.9px;width:4px;height:1px;background:#464646"></div>
<div class="a" style="left:43px;top:109.7px;width:4px;height:1px;background:#464646"></div>
<div class="a" style="left:43px;top:113.5px;width:4px;height:1px;background:#464646"></div>
<div class="a" style="left:43px;top:117.3px;width:4px;height:1px;background:#464646"></div>
<div class="t" style="left:36px;top:84.3px;font-size:8.6px;transform:scaleX(0.85);transform-origin:0 0;color:#c4c4c4">1</div>
<div class="t" style="left:36px;top:91.5px;font-size:8.6px;transform:scaleX(0.85);transform-origin:0 0;color:#c4c4c4">5</div>
<div class="t" style="left:36px;top:98.8px;font-size:8.6px;transform:scaleX(0.85);transform-origin:0 0;color:#c4c4c4">0</div>
<div class="a" style="left:34px;top:121.1px;width:13px;height:1px;background:#707070"></div>
<div class="a" style="left:43px;top:124.9px;width:4px;height:1px;background:#464646"></div>
<div class="a" style="left:43px;top:128.7px;width:4px;height:1px;background:#464646"></div>
<div class="a" style="left:43px;top:132.5px;width:4px;height:1px;background:#464646"></div>
<div class="a" style="left:43px;top:136.3px;width:4px;height:1px;background:#464646"></div>
<div class="a" style="left:42px;top:140.1px;width:5px;height:1px;background:#505050"></div>
<div class="a" style="left:43px;top:143.9px;width:4px;height:1px;background:#464646"></div>
<div class="a" style="left:43px;top:147.7px;width:4px;height:1px;background:#464646"></div>
<div class="a" style="left:43px;top:151.5px;width:4px;height:1px;background:#464646"></div>
<div class="a" style="left:43px;top:155.3px;width:4px;height:1px;background:#464646"></div>
<div class="t" style="left:36px;top:122.3px;font-size:8.6px;transform:scaleX(0.85);transform-origin:0 0;color:#c4c4c4">1</div>
<div class="t" style="left:36px;top:129.5px;font-size:8.6px;transform:scaleX(0.85);transform-origin:0 0;color:#c4c4c4">0</div>
<div class="t" style="left:36px;top:136.7px;font-size:8.6px;transform:scaleX(0.85);transform-origin:0 0;color:#c4c4c4">0</div>
<div class="a" style="left:34px;top:159.1px;width:13px;height:1px;background:#707070"></div>
<div class="a" style="left:43px;top:162.8px;width:4px;height:1px;background:#464646"></div>
<div class="a" style="left:43px;top:166.6px;width:4px;height:1px;background:#464646"></div>
<div class="a" style="left:43px;top:170.4px;width:4px;height:1px;background:#464646"></div>
<div class="a" style="left:43px;top:174.2px;width:4px;height:1px;background:#464646"></div>
<div class="a" style="left:42px;top:178.0px;width:5px;height:1px;background:#505050"></div>
<div class="a" style="left:43px;top:181.8px;width:4px;height:1px;background:#464646"></div>
<div class="a" style="left:43px;top:185.6px;width:4px;height:1px;background:#464646"></div>
<div class="a" style="left:43px;top:189.4px;width:4px;height:1px;background:#464646"></div>
<div class="a" style="left:43px;top:193.2px;width:4px;height:1px;background:#464646"></div>
<div class="t" style="left:36px;top:160.2px;font-size:8.6px;transform:scaleX(0.85);transform-origin:0 0;color:#c4c4c4">5</div>
<div class="t" style="left:36px;top:167.4px;font-size:8.6px;transform:scaleX(0.85);transform-origin:0 0;color:#c4c4c4">0</div>
<div class="a" style="left:34px;top:197.0px;width:13px;height:1px;background:#707070"></div>
<div class="a" style="left:43px;top:200.8px;width:4px;height:1px;background:#464646"></div>
<div class="a" style="left:43px;top:204.6px;width:4px;height:1px;background:#464646"></div>
<div class="a" style="left:43px;top:208.4px;width:4px;height:1px;background:#464646"></div>
<div class="a" style="left:43px;top:212.2px;width:4px;height:1px;background:#464646"></div>
<div class="a" style="left:42px;top:216.0px;width:5px;height:1px;background:#505050"></div>
<div class="a" style="left:43px;top:219.8px;width:4px;height:1px;background:#464646"></div>
<div class="a" style="left:43px;top:223.6px;width:4px;height:1px;background:#464646"></div>
<div class="a" style="left:43px;top:227.4px;width:4px;height:1px;background:#464646"></div>
<div class="a" style="left:43px;top:231.2px;width:4px;height:1px;background:#464646"></div>
<div class="t" style="left:36px;top:198.2px;font-size:8.6px;transform:scaleX(0.85);transform-origin:0 0;color:#c4c4c4">0</div>
<div class="a" style="left:34px;top:234.9px;width:13px;height:1px;background:#707070"></div>
<div class="a" style="left:43px;top:238.7px;width:4px;height:1px;background:#464646"></div>
<div class="a" style="left:43px;top:242.5px;width:4px;height:1px;background:#464646"></div>
<div class="a" style="left:43px;top:246.3px;width:4px;height:1px;background:#464646"></div>
<div class="a" style="left:43px;top:250.1px;width:4px;height:1px;background:#464646"></div>
<div class="a" style="left:42px;top:253.9px;width:5px;height:1px;background:#505050"></div>
<div class="a" style="left:43px;top:257.7px;width:4px;height:1px;background:#464646"></div>
<div class="a" style="left:43px;top:261.5px;width:4px;height:1px;background:#464646"></div>
<div class="a" style="left:43px;top:265.3px;width:4px;height:1px;background:#464646"></div>
<div class="a" style="left:43px;top:269.1px;width:4px;height:1px;background:#464646"></div>
<div class="t" style="left:36px;top:236.1px;font-size:8.6px;transform:scaleX(0.85);transform-origin:0 0;color:#c4c4c4">5</div>
<div class="t" style="left:36px;top:243.3px;font-size:8.6px;transform:scaleX(0.85);transform-origin:0 0;color:#c4c4c4">0</div>
<div class="a" style="left:34px;top:272.9px;width:13px;height:1px;background:#707070"></div>
<div class="a" style="left:43px;top:276.7px;width:4px;height:1px;background:#464646"></div>
<div class="a" style="left:43px;top:280.5px;width:4px;height:1px;background:#464646"></div>
<div class="a" style="left:43px;top:284.3px;width:4px;height:1px;background:#464646"></div>
<div class="a" style="left:43px;top:288.1px;width:4px;height:1px;background:#464646"></div>
<div class="a" style="left:42px;top:291.9px;width:5px;height:1px;background:#505050"></div>
<div class="a" style="left:43px;top:295.7px;width:4px;height:1px;background:#464646"></div>
<div class="a" style="left:43px;top:299.5px;width:4px;height:1px;background:#464646"></div>
<div class="a" style="left:43px;top:303.3px;width:4px;height:1px;background:#464646"></div>
<div class="a" style="left:43px;top:307.1px;width:4px;height:1px;background:#464646"></div>
<div class="t" style="left:36px;top:274.1px;font-size:8.6px;transform:scaleX(0.85);transform-origin:0 0;color:#c4c4c4">1</div>
<div class="t" style="left:36px;top:281.3px;font-size:8.6px;transform:scaleX(0.85);transform-origin:0 0;color:#c4c4c4">0</div>
<div class="t" style="left:36px;top:288.5px;font-size:8.6px;transform:scaleX(0.85);transform-origin:0 0;color:#c4c4c4">0</div>
<div class="a" style="left:34px;top:310.9px;width:13px;height:1px;background:#707070"></div>
<div class="a" style="left:43px;top:314.6px;width:4px;height:1px;background:#464646"></div>
<div class="a" style="left:43px;top:318.4px;width:4px;height:1px;background:#464646"></div>
<div class="a" style="left:43px;top:322.2px;width:4px;height:1px;background:#464646"></div>
<div class="a" style="left:43px;top:326.0px;width:4px;height:1px;background:#464646"></div>
<div class="a" style="left:42px;top:329.8px;width:5px;height:1px;background:#505050"></div>
<div class="a" style="left:43px;top:333.6px;width:4px;height:1px;background:#464646"></div>
<div class="a" style="left:43px;top:337.4px;width:4px;height:1px;background:#464646"></div>
<div class="a" style="left:43px;top:341.2px;width:4px;height:1px;background:#464646"></div>
<div class="a" style="left:43px;top:345.0px;width:4px;height:1px;background:#464646"></div>
<div class="t" style="left:36px;top:312.1px;font-size:8.6px;transform:scaleX(0.85);transform-origin:0 0;color:#c4c4c4">1</div>
<div class="t" style="left:36px;top:319.2px;font-size:8.6px;transform:scaleX(0.85);transform-origin:0 0;color:#c4c4c4">5</div>
<div class="t" style="left:36px;top:326.4px;font-size:8.6px;transform:scaleX(0.85);transform-origin:0 0;color:#c4c4c4">0</div>
<div class="a" style="left:34px;top:348.8px;width:13px;height:1px;background:#707070"></div>
<div class="a" style="left:43px;top:352.6px;width:4px;height:1px;background:#464646"></div>
<div class="a" style="left:43px;top:356.4px;width:4px;height:1px;background:#464646"></div>
<div class="a" style="left:43px;top:360.2px;width:4px;height:1px;background:#464646"></div>
<div class="a" style="left:43px;top:364.0px;width:4px;height:1px;background:#464646"></div>
<div class="a" style="left:42px;top:367.8px;width:5px;height:1px;background:#505050"></div>
<div class="a" style="left:43px;top:371.6px;width:4px;height:1px;background:#464646"></div>
<div class="a" style="left:43px;top:375.4px;width:4px;height:1px;background:#464646"></div>
<div class="a" style="left:43px;top:379.2px;width:4px;height:1px;background:#464646"></div>
<div class="a" style="left:43px;top:383.0px;width:4px;height:1px;background:#464646"></div>
<div class="t" style="left:36px;top:350.0px;font-size:8.6px;transform:scaleX(0.85);transform-origin:0 0;color:#c4c4c4">2</div>
<div class="t" style="left:36px;top:357.2px;font-size:8.6px;transform:scaleX(0.85);transform-origin:0 0;color:#c4c4c4">0</div>
<div class="t" style="left:36px;top:364.4px;font-size:8.6px;transform:scaleX(0.85);transform-origin:0 0;color:#c4c4c4">0</div>
<div class="a" style="left:34px;top:386.8px;width:13px;height:1px;background:#707070"></div>
<div class="a" style="left:43px;top:390.5px;width:4px;height:1px;background:#464646"></div>
<div class="a" style="left:43px;top:394.3px;width:4px;height:1px;background:#464646"></div>
<div class="a" style="left:43px;top:398.1px;width:4px;height:1px;background:#464646"></div>
<div class="a" style="left:43px;top:401.9px;width:4px;height:1px;background:#464646"></div>
<div class="a" style="left:42px;top:405.7px;width:5px;height:1px;background:#505050"></div>
<div class="a" style="left:43px;top:409.5px;width:4px;height:1px;background:#464646"></div>
<div class="a" style="left:43px;top:413.3px;width:4px;height:1px;background:#464646"></div>
<div class="a" style="left:43px;top:417.1px;width:4px;height:1px;background:#464646"></div>
<div class="a" style="left:43px;top:420.9px;width:4px;height:1px;background:#464646"></div>
<div class="t" style="left:36px;top:387.9px;font-size:8.6px;transform:scaleX(0.85);transform-origin:0 0;color:#c4c4c4">2</div>
<div class="t" style="left:36px;top:395.1px;font-size:8.6px;transform:scaleX(0.85);transform-origin:0 0;color:#c4c4c4">5</div>
<div class="t" style="left:36px;top:402.3px;font-size:8.6px;transform:scaleX(0.85);transform-origin:0 0;color:#c4c4c4">0</div>
<div class="a" style="left:34px;top:424.7px;width:13px;height:1px;background:#707070"></div>
<div class="a" style="left:43px;top:428.5px;width:4px;height:1px;background:#464646"></div>
<div class="a" style="left:43px;top:432.3px;width:4px;height:1px;background:#464646"></div>
<div class="a" style="left:43px;top:436.1px;width:4px;height:1px;background:#464646"></div>
<div class="a" style="left:43px;top:439.9px;width:4px;height:1px;background:#464646"></div>
<div class="a" style="left:42px;top:443.7px;width:5px;height:1px;background:#505050"></div>
<div class="a" style="left:43px;top:447.5px;width:4px;height:1px;background:#464646"></div>
<div class="a" style="left:43px;top:451.3px;width:4px;height:1px;background:#464646"></div>
<div class="a" style="left:43px;top:455.1px;width:4px;height:1px;background:#464646"></div>
<div class="a" style="left:43px;top:458.9px;width:4px;height:1px;background:#464646"></div>
<div class="t" style="left:36px;top:425.9px;font-size:8.6px;transform:scaleX(0.85);transform-origin:0 0;color:#c4c4c4">3</div>
<div class="t" style="left:36px;top:433.1px;font-size:8.6px;transform:scaleX(0.85);transform-origin:0 0;color:#c4c4c4">0</div>
<div class="t" style="left:36px;top:440.3px;font-size:8.6px;transform:scaleX(0.85);transform-origin:0 0;color:#c4c4c4">0</div>
<div class="a" style="left:34px;top:462.7px;width:13px;height:1px;background:#707070"></div>
<div class="a" style="left:43px;top:466.4px;width:4px;height:1px;background:#464646"></div>
<div class="a" style="left:43px;top:470.2px;width:4px;height:1px;background:#464646"></div>
<div class="a" style="left:43px;top:474.0px;width:4px;height:1px;background:#464646"></div>
<div class="a" style="left:43px;top:477.8px;width:4px;height:1px;background:#464646"></div>
<div class="a" style="left:42px;top:481.6px;width:5px;height:1px;background:#505050"></div>
<div class="a" style="left:43px;top:485.4px;width:4px;height:1px;background:#464646"></div>
<div class="a" style="left:43px;top:489.2px;width:4px;height:1px;background:#464646"></div>
<div class="a" style="left:43px;top:493.0px;width:4px;height:1px;background:#464646"></div>
<div class="a" style="left:43px;top:496.8px;width:4px;height:1px;background:#464646"></div>
<div class="t" style="left:36px;top:463.9px;font-size:8.6px;transform:scaleX(0.85);transform-origin:0 0;color:#c4c4c4">3</div>
<div class="t" style="left:36px;top:471.1px;font-size:8.6px;transform:scaleX(0.85);transform-origin:0 0;color:#c4c4c4">5</div>
<div class="t" style="left:36px;top:478.2px;font-size:8.6px;transform:scaleX(0.85);transform-origin:0 0;color:#c4c4c4">0</div>
<div class="a" style="left:34px;top:500.6px;width:13px;height:1px;background:#707070"></div>
<div class="a" style="left:43px;top:504.4px;width:4px;height:1px;background:#464646"></div>
<div class="a" style="left:43px;top:508.2px;width:4px;height:1px;background:#464646"></div>
<div class="a" style="left:43px;top:512.0px;width:4px;height:1px;background:#464646"></div>
<div class="a" style="left:43px;top:515.8px;width:4px;height:1px;background:#464646"></div>
<div class="a" style="left:42px;top:519.6px;width:5px;height:1px;background:#505050"></div>
<div class="a" style="left:43px;top:523.4px;width:4px;height:1px;background:#464646"></div>
<div class="a" style="left:43px;top:527.2px;width:4px;height:1px;background:#464646"></div>
<div class="a" style="left:43px;top:531.0px;width:4px;height:1px;background:#464646"></div>
<div class="a" style="left:43px;top:534.8px;width:4px;height:1px;background:#464646"></div>
<div class="t" style="left:36px;top:501.8px;font-size:8.6px;transform:scaleX(0.85);transform-origin:0 0;color:#c4c4c4">4</div>
<div class="t" style="left:36px;top:509.0px;font-size:8.6px;transform:scaleX(0.85);transform-origin:0 0;color:#c4c4c4">0</div>
<div class="t" style="left:36px;top:516.2px;font-size:8.6px;transform:scaleX(0.85);transform-origin:0 0;color:#c4c4c4">0</div>
<div class="a" style="left:34px;top:538.5px;width:13px;height:1px;background:#707070"></div>
<div class="a" style="left:43px;top:542.3px;width:4px;height:1px;background:#464646"></div>
<div class="a" style="left:43px;top:546.1px;width:4px;height:1px;background:#464646"></div>
<div class="a" style="left:43px;top:549.9px;width:4px;height:1px;background:#464646"></div>
<div class="a" style="left:43px;top:553.7px;width:4px;height:1px;background:#464646"></div>
<div class="a" style="left:42px;top:557.5px;width:5px;height:1px;background:#505050"></div>
<div class="a" style="left:43px;top:561.3px;width:4px;height:1px;background:#464646"></div>
<div class="a" style="left:43px;top:565.1px;width:4px;height:1px;background:#464646"></div>
<div class="a" style="left:43px;top:568.9px;width:4px;height:1px;background:#464646"></div>
<div class="a" style="left:43px;top:572.7px;width:4px;height:1px;background:#464646"></div>
<div class="t" style="left:36px;top:539.8px;font-size:8.6px;transform:scaleX(0.85);transform-origin:0 0;color:#c4c4c4">4</div>
<div class="t" style="left:36px;top:547.0px;font-size:8.6px;transform:scaleX(0.85);transform-origin:0 0;color:#c4c4c4">5</div>
<div class="t" style="left:36px;top:554.1px;font-size:8.6px;transform:scaleX(0.85);transform-origin:0 0;color:#c4c4c4">0</div>
<div class="a" style="left:34px;top:576.5px;width:13px;height:1px;background:#707070"></div>
<div class="a" style="left:43px;top:580.3px;width:4px;height:1px;background:#464646"></div>
<div class="a" style="left:43px;top:584.1px;width:4px;height:1px;background:#464646"></div>
<div class="a" style="left:43px;top:587.9px;width:4px;height:1px;background:#464646"></div>
<div class="a" style="left:43px;top:591.7px;width:4px;height:1px;background:#464646"></div>
<div class="a" style="left:42px;top:595.5px;width:5px;height:1px;background:#505050"></div>
<div class="a" style="left:43px;top:599.3px;width:4px;height:1px;background:#464646"></div>
<div class="a" style="left:43px;top:603.1px;width:4px;height:1px;background:#464646"></div>
<div class="a" style="left:43px;top:606.9px;width:4px;height:1px;background:#464646"></div>
<div class="a" style="left:43px;top:610.7px;width:4px;height:1px;background:#464646"></div>
<div class="t" style="left:36px;top:577.7px;font-size:8.6px;transform:scaleX(0.85);transform-origin:0 0;color:#c4c4c4">5</div>
<div class="t" style="left:36px;top:584.9px;font-size:8.6px;transform:scaleX(0.85);transform-origin:0 0;color:#c4c4c4">0</div>
<div class="t" style="left:36px;top:592.1px;font-size:8.6px;transform:scaleX(0.85);transform-origin:0 0;color:#c4c4c4">0</div>
<div class="a" style="left:34px;top:614.5px;width:13px;height:1px;background:#707070"></div>
<div class="a" style="left:43px;top:618.2px;width:4px;height:1px;background:#464646"></div>
<div class="a" style="left:43px;top:622.0px;width:4px;height:1px;background:#464646"></div>
<div class="a" style="left:43px;top:625.8px;width:4px;height:1px;background:#464646"></div>
<div class="a" style="left:43px;top:629.6px;width:4px;height:1px;background:#464646"></div>
<div class="a" style="left:42px;top:633.4px;width:5px;height:1px;background:#505050"></div>
<div class="a" style="left:43px;top:637.2px;width:4px;height:1px;background:#464646"></div>
<div class="a" style="left:43px;top:641.0px;width:4px;height:1px;background:#464646"></div>
<div class="a" style="left:43px;top:644.8px;width:4px;height:1px;background:#464646"></div>
<div class="a" style="left:43px;top:648.6px;width:4px;height:1px;background:#464646"></div>
<div class="t" style="left:36px;top:615.7px;font-size:8.6px;transform:scaleX(0.85);transform-origin:0 0;color:#c4c4c4">5</div>
<div class="t" style="left:36px;top:622.9px;font-size:8.6px;transform:scaleX(0.85);transform-origin:0 0;color:#c4c4c4">5</div>
<div class="t" style="left:36px;top:630.1px;font-size:8.6px;transform:scaleX(0.85);transform-origin:0 0;color:#c4c4c4">0</div>
<div class="a" style="left:34px;top:652.4px;width:13px;height:1px;background:#707070"></div>
<div class="a" style="left:43px;top:656.2px;width:4px;height:1px;background:#464646"></div>
<div class="a" style="left:43px;top:660.0px;width:4px;height:1px;background:#464646"></div>
<div class="a" style="left:43px;top:663.8px;width:4px;height:1px;background:#464646"></div>
<div class="a" style="left:43px;top:667.6px;width:4px;height:1px;background:#464646"></div>
<div class="a" style="left:42px;top:671.4px;width:5px;height:1px;background:#505050"></div>
<div class="a" style="left:43px;top:675.2px;width:4px;height:1px;background:#464646"></div>
<div class="a" style="left:43px;top:679.0px;width:4px;height:1px;background:#464646"></div>
<div class="a" style="left:43px;top:682.8px;width:4px;height:1px;background:#464646"></div>
<div class="a" style="left:43px;top:686.6px;width:4px;height:1px;background:#464646"></div>
<div class="t" style="left:36px;top:653.6px;font-size:8.6px;transform:scaleX(0.85);transform-origin:0 0;color:#c4c4c4">6</div>
<div class="t" style="left:36px;top:660.8px;font-size:8.6px;transform:scaleX(0.85);transform-origin:0 0;color:#c4c4c4">0</div>
<div class="t" style="left:36px;top:668.0px;font-size:8.6px;transform:scaleX(0.85);transform-origin:0 0;color:#c4c4c4">0</div>
<div class="a" style="left:34px;top:690.4px;width:13px;height:1px;background:#707070"></div>
<div class="t" style="left:36px;top:691.6px;font-size:8.6px;transform:scaleX(0.85);transform-origin:0 0;color:#c4c4c4">6</div>
<div class="t" style="left:36px;top:698.8px;font-size:8.6px;transform:scaleX(0.85);transform-origin:0 0;color:#c4c4c4">5</div>
<div class="t" style="left:36px;top:706.0px;font-size:8.6px;transform:scaleX(0.85);transform-origin:0 0;color:#c4c4c4">0</div>
<div class="a" style="left:47px;top:78px;width:714px;height:613px;background:#282828;"></div>
<div class="a" style="left:761px;top:65px;width:13px;height:629px;background:#3a3a3a;"></div>
<div class="a" style="left:47px;top:691px;width:714px;height:3px;background:#2b2b2b;"></div>
<div class="a" style="left:774px;top:51px;width:2px;height:657px;background:#2c2c2c;"></div>
<div class="a" style="left:213px;top:196px;width:382px;height:382px;background:#1c1c1c;"></div>
<div class="a" style="left:214px;top:197px;width:380px;height:379px;background:#ffffff;"></div>
<svg class="a" style="left:214px;top:197px" width="380" height="379" viewBox="0 0 380 379"><g transform="translate(-214,-197)"><circle cx="404.4" cy="386.4" r="182" fill="none" stroke="#26b049" stroke-width="12.3"/><circle cx="404.4" cy="386.4" r="154.2" fill="none" stroke="#26b049" stroke-width="7.2"/><path d="M312.20,368.23 A94,94 0 0 1 463.53,312.85" fill="none" stroke="#26b049" stroke-width="5"/><path d="M496.61,404.74 A94,94 0 0 1 347.67,460.87" fill="none" stroke="#26b049" stroke-width="5"/><polygon points="294.45,304.45 302.90,307.09 310.13,301.97 310.24,310.82 317.33,316.11 308.95,318.95 306.11,327.33 300.82,320.24 291.97,320.13 297.09,312.90" fill="#26b049"/><polygon points="339.05,262.09 345.28,268.38 354.06,267.26 350.00,275.12 353.78,283.12 345.05,281.69 338.60,287.76 337.27,279.02 329.50,274.76 337.41,270.79" fill="#26b049"/><polygon points="404.00,244.00 408.11,251.84 416.84,253.33 410.66,259.66 411.94,268.42 404.00,264.50 396.06,268.42 397.34,259.66 391.16,253.33 399.89,251.84" fill="#26b049"/><polygon points="474.09,259.37 474.66,268.20 482.03,273.11 473.80,276.38 471.41,284.90 465.75,278.09 456.91,278.45 461.64,270.97 458.57,262.67 467.14,264.85" fill="#26b049"/><polygon points="529.58,470.22 520.85,468.79 514.40,474.86 513.07,466.12 505.30,461.86 513.21,457.89 514.85,449.19 521.08,455.48 529.86,454.36 525.80,462.22" fill="#26b049"/><polygon points="473.34,516.72 466.03,511.73 457.62,514.51 460.11,506.02 454.87,498.88 463.71,498.62 468.88,491.43 471.86,499.76 480.29,502.46 473.29,507.87" fill="#26b049"/><polygon points="407.20,530.00 403.09,522.16 394.36,520.67 400.54,514.34 399.26,505.58 407.20,509.50 415.14,505.58 413.86,514.34 420.04,520.67 411.31,522.16" fill="#26b049"/><polygon points="340.48,516.93 340.22,508.09 333.03,502.92 341.36,499.94 344.06,491.51 349.47,498.51 358.32,498.46 353.33,505.77 356.11,514.18 347.62,511.69" fill="#26b049"/><path d="M283.4,403.6 L336,383.8 Q342,382 344,387.5 L349,403 Q350,406.5 346.5,408 L297.2,427" fill="none" stroke="#26b049" stroke-width="4.1" stroke-linecap="round" stroke-linejoin="round"/><path d="M289.8,415.7 L304.5,454 Q307.5,460.5 314,458.3 L357,442.5 Q364.5,439.5 364,432.5 L361.2,420.2" fill="none" stroke="#26b049" stroke-width="4.1" stroke-linecap="round" stroke-linejoin="round"/><path d="M360.6,369.2 L373.3,374.9" fill="none" stroke="#26b049" stroke-width="4.1" stroke-linecap="round" stroke-linejoin="round"/><path d="M365.8,392 L374.7,388.9 L388,421.8 L383,435.7" fill="none" stroke="#26b049" stroke-width="4.1" stroke-linecap="round" stroke-linejoin="round"/><path d="M386.5,421.5 Q392,426 402,423 L448.7,408.5" fill="none" stroke="#26b049" stroke-width="4.1" stroke-linecap="round" stroke-linejoin="round"/><path d="M382.4,363.1 L419,350 Q423.5,349 421,353 L409.4,366.6" fill="none" stroke="#26b049" stroke-width="4.1" stroke-linecap="round" stroke-linejoin="round"/><path d="M392.7,367.1 L410.4,365.6" fill="none" stroke="#26b049" stroke-width="4.1" stroke-linecap="round" stroke-linejoin="round"/><path d="M401.9,417.3 L389,380.5 Q388,377.5 391.5,376.5 L424,365 Q427,364 428,367.5 L440,399 Q441,402 437.5,403 L430.1,405" fill="none" stroke="#26b049" stroke-width="4.1" stroke-linecap="round" stroke-linejoin="round"/><path d="M409.4,366.6 L422.3,409.7" fill="none" stroke="#26b049" stroke-width="4.1" stroke-linecap="round" stroke-linejoin="round"/><path d="M394.7,388.7 L430.1,377.4" fill="none" stroke="#26b049" stroke-width="4.1" stroke-linecap="round" stroke-linejoin="round"/><path d="M398.1,401.5 L435,390.2" fill="none" stroke="#26b049" stroke-width="4.1" stroke-linecap="round" stroke-linejoin="round"/><path d="M439.3,342.2 L456.1,345.5" fill="none" stroke="#26b049" stroke-width="4.1" stroke-linecap="round" stroke-linejoin="round"/><path d="M446,366.6 L457,363.2 L469.6,393.6 L462,405.4" fill="none" stroke="#26b049" stroke-width="4.1" stroke-linecap="round" stroke-linejoin="round"/><path d="M469,394 Q474,399 482,396 L528.6,379.3" fill="none" stroke="#26b049" stroke-width="4.1" stroke-linecap="round" stroke-linejoin="round"/><path d="M461.2,347.2 L507.6,329.5" fill="none" stroke="#26b049" stroke-width="4.1" stroke-linecap="round" stroke-linejoin="round"/><path d="M489.9,319.4 L508,366 Q510,371 505,373 L487.3,379.3" fill="none" stroke="#26b049" stroke-width="4.1" stroke-linecap="round" stroke-linejoin="round"/><path d="M473,354.8 L488.2,363.2" fill="none" stroke="#26b049" stroke-width="4.1" stroke-linecap="round" stroke-linejoin="round"/></g></svg>
<div class="a" style="left:34px;top:694px;width:190px;height:13px;background:#535353;"></div>
<div class="a" style="left:224px;top:694px;width:550px;height:13px;background:#424242;"></div>
<div class="a" style="left:0px;top:707px;width:1000px;height:1px;background:#2e2e2e;"></div>
<div class="a" style="left:0px;top:708px;width:1000px;height:3px;background:#4e4e4e;"></div>
<div class="t" style="left:41.5px;top:697px;font-size:10px;color:#e0e0e0;transform:scaleX(0.8601);transform-origin:0 0;">100%</div>
<svg class="a" style="left:72px;top:697px;" width="10" height="8" viewBox="0 0 10 8"><rect x="0.5" y="2.5" width="8" height="5" fill="none" stroke="#cfcfcf"/><path d="M3 5 L8 1 M5.5 0.8 H8.2 V3.5" fill="none" stroke="#cfcfcf"/></svg>
<div class="t" style="left:112px;top:697px;font-size:10px;color:#e0e0e0;transform:scaleX(0.8760);transform-origin:0 0;">文档:732.4K/1.91M</div>
<svg class="a" style="left:217px;top:698px;" width="6" height="8" viewBox="0 0 6 8"><path d="M0 0 L6 4 L0 8Z" fill="#e8e8e8"/></svg>
<div class="a" style="left:776px;top:51px;width:220px;height:9px;background:#3b3b3b;"></div>
<svg class="a" style="left:795px;top:53px;" width="8" height="5" viewBox="0 0 8 5"><path d="M3 0 L0 2.5 L3 5Z M7 0 L4 2.5 L7 5Z" fill="#bbb"/></svg>
<svg class="a" style="left:986px;top:53px;" width="8" height="5" viewBox="0 0 8 5"><path d="M0 0 L3 2.5 L0 5Z M4 0 L7 2.5 L4 5Z" fill="#bbb"/></svg>
<div class="a" style="left:776px;top:60px;width:28px;height:647px;background:#535353;"></div>
<div class="a" style="left:804px;top:60px;width:2px;height:647px;background:#2c2c2c;"></div>
<div class="a" style="left:777px;top:60px;width:26px;height:73px;background:#535353;border-bottom:1px solid #3a3a3a"></div>
<div class="a" style="left:784px;top:63px;width:12px;height:2px;background:#3d3d3d;"></div>
<div class="a" style="left:777px;top:135px;width:26px;height:50px;background:#535353;border-bottom:1px solid #3a3a3a"></div>
<div class="a" style="left:784px;top:138px;width:12px;height:2px;background:#3d3d3d;"></div>
<div class="a" style="left:777px;top:186px;width:26px;height:51px;background:#535353;border-bottom:1px solid #3a3a3a"></div>
<div class="a" style="left:784px;top:189px;width:12px;height:2px;background:#3d3d3d;"></div>
<div class="a" style="left:777px;top:239px;width:26px;height:51px;background:#535353;border-bottom:1px solid #3a3a3a"></div>
<div class="a" style="left:784px;top:242px;width:12px;height:2px;background:#3d3d3d;"></div>
<div class="a" style="left:777px;top:292px;width:26px;height:28px;background:#535353;border-bottom:1px solid #3a3a3a"></div>
<div class="a" style="left:784px;top:295px;width:12px;height:2px;background:#3d3d3d;"></div>
<div class="a" style="left:776px;top:133px;width:28px;height:2px;background:#333;"></div>
<div class="a" style="left:776px;top:185px;width:28px;height:1px;background:#333;"></div>
<div class="a" style="left:776px;top:237px;width:28px;height:2px;background:#333;"></div>
<div class="a" style="left:776px;top:290px;width:28px;height:2px;background:#333;"></div>
<div class="a" style="left:776px;top:320px;width:28px;height:1px;background:#3a3a3a;"></div>
<svg class="a" style="left:783px;top:70px;" width="15" height="15" viewBox="0 0 15 15"><rect x="1" y="1" width="3" height="2.5" fill="#d0d0d0"/><rect x="5" y="1" width="3" height="2.5" fill="#d0d0d0"/><rect x="1" y="5.5" width="3" height="2.5" fill="#d0d0d0"/><rect x="5" y="5.5" width="3" height="2.5" fill="#d0d0d0"/><rect x="1" y="10" width="7" height="4" fill="#d0d0d0"/><path d="M10 3 C14 4 14 10 11 12" fill="none" stroke="#d0d0d0" stroke-width="1.5"/><path d="M9 1 L11.5 3.5 L9 5" fill="#d0d0d0"/></svg>
<svg class="a" style="left:784px;top:94px;" width="13" height="11" viewBox="0 0 13 11"><path d="M0.5 0 L12.5 5.5 L0.5 11Z" fill="#d0d0d0"/></svg>
<svg class="a" style="left:783px;top:112px;" width="17" height="16" viewBox="0 0 17 16"><path d="M1 4 L4 1 H9 L15 9 V15 H10 L5 9 V4Z M5 4 H9 L14 11" fill="none" stroke="#d0d0d0" stroke-width="1.3"/><path d="M3 5 L3 9 L6 7Z" fill="#d0d0d0"/></svg>
<svg class="a" style="left:784px;top:144px;" width="11" height="16" viewBox="0 0 11 16"><rect x="2.5" y="9" width="6" height="6" fill="#d0d0d0"/><path d="M3 9 L1 2 M5.5 9 L5.5 1 M8 9 L10 3" stroke="#d0d0d0" stroke-width="1.6"/></svg>
<svg class="a" style="left:783px;top:166px;" width="16" height="15" viewBox="0 0 16 15"><path d="M1 3 H9 M8 9 H15" stroke="#d0d0d0" stroke-width="1.3"/><ellipse cx="4" cy="3" rx="3" ry="2" fill="#d0d0d0"/><path d="M10 7 C14 7 15 10 12 13 L9 10Z" fill="#d0d0d0"/><path d="M1 9 H8 V12 H1Z" fill="none" stroke="#d0d0d0" stroke-width="1.2"/></svg>
<div class="t" style="left:785px;top:198px;font-size:12px;color:#d4d4d4;">A</div>
<div class="a" style="left:795px;top:199px;width:1px;height:11px;background:#d4d4d4;"></div>
<svg class="a" style="left:786px;top:219px;" width="10" height="12" viewBox="0 0 10 12"><path d="M5 1 H9 M5.5 1 V11 M8 1 V11" stroke="#d0d0d0" stroke-width="1.3"/><circle cx="4" cy="4" r="3.2" fill="#d0d0d0"/></svg>
<svg class="a" style="left:784px;top:249px;" width="13" height="13" viewBox="0 0 13 13"><rect x="1" y="1" width="11" height="11" fill="none" stroke="#d0d0d0" stroke-width="1.6"/><path d="M1 7 H12 M6.5 1 V7" stroke="#d0d0d0" stroke-width="1.4"/></svg>
<svg class="a" style="left:784px;top:271px;" width="13" height="14" viewBox="0 0 13 14"><path d="M1 1 H12 V10 L9 13 H1Z" fill="#d0d0d0"/><path d="M3 4 H10 M3 6.5 H10 M3 9 H7" stroke="#535353" stroke-width="1"/></svg>
<svg class="a" style="left:781px;top:298px;" width="19" height="21" viewBox="0 0 19 21"><path d="M2 19 L15 4 M17 19 L4 4" stroke="#d8d8d8" stroke-width="1.8"/><path d="M14 5 L17 1 L18 4Z M5 5 L2 1 L1 4Z" fill="#d8d8d8"/><ellipse cx="16" cy="3" rx="2" ry="2.8" fill="#d8d8d8"/><ellipse cx="3" cy="3" rx="2" ry="2.8" fill="#d8d8d8"/></svg>
<div class="a" style="left:806px;top:60px;width:190px;height:13px;background:#3b3b3b;"></div>
<div class="a" style="left:806px;top:60px;width:30px;height:13px;background:#535353;"></div>
<div class="t" style="left:812px;top:62.5px;font-size:10px;color:#e0e0e0;transform:scaleX(0.9500);transform-origin:0 0;">属性</div>
<div class="t" style="left:841.5px;top:62.5px;font-size:10px;color:#9a9a9a;transform:scaleX(0.9500);transform-origin:0 0;">颜色</div>
<svg class="a" style="left:979px;top:65px;" width="14" height="6" viewBox="0 0 14 6"><path d="M0 1 L4 1 L2 4Z" fill="#cfcfcf"/><path d="M6 0.5 H13 M6 2.5 H13 M6 4.5 H13" stroke="#bbb" stroke-width="1"/></svg>
<div class="a" style="left:806px;top:73px;width:190px;height:26px;background:#535353;"></div>
<div class="t" style="left:812.5px;top:82px;font-size:10.5px;color:#eeeeee;transform:scaleX(0.8485);transform-origin:0 0;">无属性</div>
<div class="a" style="left:806px;top:98px;width:190px;height:1px;background:#404040;"></div>
<div class="a" style="left:806px;top:99px;width:190px;height:1px;background:#5c5c5c;"></div>
<div class="a" style="left:806px;top:100px;width:179px;height:230px;background:#535353;"></div>
<div class="a" style="left:985px;top:100px;width:11px;height:216px;background:#4a4a4a;border-left:1px solid #444"></div>
<div class="a" style="left:985px;top:316px;width:11px;height:14px;background:#535353;"></div>
<div class="a" style="left:806px;top:330px;width:190px;height:2px;background:#2e2e2e;"></div>
<div class="a" style="left:806px;top:332px;width:190px;height:14px;background:#3b3b3b;"></div>
<div class="a" style="left:806px;top:332px;width:30px;height:14px;background:#535353;"></div>
<div class="t" style="left:812px;top:335.5px;font-size:10px;color:#e6e6e6;transform:scaleX(0.9500);transform-origin:0 0;">图层</div>
<div class="t" style="left:841px;top:335.5px;font-size:10px;color:#a8a8a8;transform:scaleX(0.9750);transform-origin:0 0;">通道</div>
<div class="t" style="left:871.5px;top:335.5px;font-size:10px;color:#a8a8a8;transform:scaleX(0.9500);transform-origin:0 0;">路径</div>
<div class="a" style="left:836px;top:332px;width:1px;height:14px;background:#333;"></div>
<div class="a" style="left:866px;top:332px;width:1px;height:14px;background:#333;"></div>
<div class="a" style="left:896px;top:332px;width:1px;height:14px;background:#333;"></div>
<svg class="a" style="left:983px;top:338px;" width="11" height="6" viewBox="0 0 11 6"><path d="M0 1 L4 1 L2 4Z" fill="#cfcfcf"/><path d="M5 0.5 H11 M5 2.5 H11 M5 4.5 H11" stroke="#bbb" stroke-width="1"/></svg>
<div class="a" style="left:806px;top:346px;width:190px;height:361px;background:#535353;"></div>
<div class="a" style="left:809px;top:350px;width:63px;height:14px;background:#555;border:1px solid #3a3a3a;border-radius:2px;background:linear-gradient(#5e5e5e,#4c4c4c)"></div>
<svg class="a" style="left:814px;top:353px;" width="9" height="9" viewBox="0 0 9 9"><circle cx="5.5" cy="3.5" r="2.8" fill="none" stroke="#ddd" stroke-width="1.2"/><path d="M3.5 5.5 L0.8 8.2" stroke="#ddd" stroke-width="1.4"/></svg>
<div class="t" style="left:826px;top:352.5px;font-size:10px;color:#e0e0e0;transform:scaleX(0.9250);transform-origin:0 0;">类型</div>
<svg class="a" style="left:864px;top:353px;" width="5" height="8" viewBox="0 0 5 8"><path d="M0 3 L2.5 0 L5 3Z M0 5 L2.5 8 L5 5Z" fill="#d0d0d0"/></svg>
<svg class="a" style="left:882px;top:351px;" width="11" height="11" viewBox="0 0 11 11"><rect x="0.5" y="0.5" width="10" height="10" fill="none" stroke="#cfcfcf"/><path d="M2 9 L5 5 L7 7 L9 5 V9Z" fill="#cfcfcf"/></svg>
<svg class="a" style="left:900px;top:351px;" width="11" height="11" viewBox="0 0 11 11"><circle cx="5.5" cy="5.5" r="5" fill="#d0d0d0"/><path d="M2.5 8.5 L8.5 2.5" stroke="#535353" stroke-width="1.5"/></svg>
<svg class="a" style="left:918px;top:351px;" width="11" height="11" viewBox="0 0 11 11"><path d="M1 1.5 H10 V4 M1 1.5 V4 M5.5 1.5 V10.5 M3 10.5 H8" fill="none" stroke="#d8d8d8" stroke-width="1.6"/></svg>
<svg class="a" style="left:937px;top:351px;" width="11" height="11" viewBox="0 0 11 11"><rect x="2" y="2" width="7" height="7" fill="none" stroke="#cfcfcf" stroke-width="1.2"/><rect x="0" y="0" width="3" height="3" fill="#cfcfcf"/><rect x="8" y="0" width="3" height="3" fill="#cfcfcf"/><rect x="0" y="8" width="3" height="3" fill="#cfcfcf"/><rect x="8" y="8" width="3" height="3" fill="#cfcfcf"/></svg>
<svg class="a" style="left:956px;top:351px;" width="11" height="12" viewBox="0 0 11 12"><path d="M4 1 H8 L10 3 V11 H4Z" fill="none" stroke="#cfcfcf" stroke-width="1.2"/><rect x="0.5" y="6" width="5" height="5" fill="#cfcfcf"/></svg>
<div class="a" style="left:977px;top:350px;width:7px;height:14px;background:#2e2e2e;border:1px solid #444;background:linear-gradient(#777 0,#777 45%,#2a2a2a 45%)"></div>
<div class="a" style="left:806px;top:367px;width:190px;height:1px;background:#464646;"></div>
<div class="a" style="left:809px;top:370px;width:84px;height:15px;background:#555;border:1px solid #3a3a3a;border-radius:2px;background:linear-gradient(#5e5e5e,#4c4c4c)"></div>
<div class="t" style="left:815.5px;top:373.5px;font-size:10.5px;color:#e6e6e6;transform:scaleX(0.8182);transform-origin:0 0;">正常</div>
<svg class="a" style="left:885px;top:374px;" width="5" height="8" viewBox="0 0 5 8"><path d="M0 3 L2.5 0 L5 3Z M0 5 L2.5 8 L5 5Z" fill="#d0d0d0"/></svg>
<div class="t" style="left:899.5px;top:373.5px;font-size:10.5px;color:#e0e0e0;transform:scaleX(0.8738);transform-origin:0 0;">不透明度:</div>
<div class="a" style="left:943px;top:371px;width:27px;height:14px;background:#2f2f2f;"></div>
<div class="t" style="left:945.5px;top:375px;font-size:10px;color:#e6e6e6;transform:scaleX(0.8601);transform-origin:0 0;">100%</div>
<div class="a" style="left:970px;top:371px;width:15px;height:14px;background:#666;border:1px solid #444"></div>
<svg class="a" style="left:975px;top:377px;" width="5" height="3" viewBox="0 0 5 3"><path d="M0 0 H5 L2.5 3Z" fill="#ddd"/></svg>
<div class="a" style="left:806px;top:388px;width:190px;height:1px;background:#464646;"></div>
<div class="t" style="left:811.5px;top:394.5px;font-size:10px;color:#e0e0e0;transform:scaleX(0.9438);transform-origin:0 0;">锁定:</div>
<svg class="a" style="left:840px;top:395px;" width="9" height="9" viewBox="0 0 9 9"><rect x="0" y="0" width="9" height="9" fill="#7a7a7a"/><rect x="0" y="0" width="3" height="3" fill="#9a9a9a"/><rect x="6" y="0" width="3" height="3" fill="#9a9a9a"/><rect x="3" y="3" width="3" height="3" fill="#9a9a9a"/><rect x="0" y="6" width="3" height="3" fill="#9a9a9a"/><rect x="6" y="6" width="3" height="3" fill="#9a9a9a"/></svg>
<svg class="a" style="left:856px;top:393px;" width="11" height="12" viewBox="0 0 11 12"><path d="M10.5 0.5 L4 7" stroke="#8a8a8a" stroke-width="1.4"/><path d="M0.5 11 C1 8 3 6.5 4.5 7.5 C5.5 9 4 11 0.5 11Z" fill="#8a8a8a"/></svg>
<svg class="a" style="left:872px;top:393px;" width="11" height="12" viewBox="0 0 11 12"><path d="M5.5 0 V12 M0 6 H11" stroke="#d8d8d8" stroke-width="1.3"/><path d="M5.5 0 L3.5 2.5 H7.5Z M5.5 12 L3.5 9.5 H7.5Z M0 6 L2.5 4 V8Z M11 6 L8.5 4 V8Z" fill="#d8d8d8"/></svg>
<svg class="a" style="left:890px;top:394px;" width="9" height="10" viewBox="0 0 9 10"><path d="M2 5 V3 A2.5 2.5 0 0 1 7 3 V5" fill="none" stroke="#d8d8d8" stroke-width="1.4"/><rect x="0.5" y="4.5" width="8" height="5.5" fill="#d8d8d8"/></svg>
<div class="t" style="left:918.5px;top:395px;font-size:10px;color:#e0e0e0;transform:scaleX(0.9657);transform-origin:0 0;">填充:</div>
<div class="a" style="left:943px;top:392px;width:27px;height:14px;background:#2f2f2f;"></div>
<div class="t" style="left:945.5px;top:396px;font-size:10px;color:#e6e6e6;transform:scaleX(0.8601);transform-origin:0 0;">100%</div>
<div class="a" style="left:970px;top:392px;width:15px;height:14px;background:#666;border:1px solid #444"></div>
<svg class="a" style="left:975px;top:398px;" width="5" height="3" viewBox="0 0 5 3"><path d="M0 0 H5 L2.5 3Z" fill="#ddd"/></svg>
<div class="a" style="left:806px;top:410px;width:190px;height:1px;background:#404040;"></div>
<div class="a" style="left:806px;top:411px;width:179px;height:282px;background:#474747;"></div>
<div class="a" style="left:985px;top:411px;width:11px;height:282px;background:#3f3f3f;border-left:1px solid #3a3a3a"></div>
<div class="a" style="left:806px;top:411px;width:179px;height:29px;background:#4a4a4a;"></div>
<div class="a" style="left:830px;top:411px;width:155px;height:29px;background:#6d7e96;"></div>
<div class="a" style="left:806px;top:440px;width:179px;height:1px;background:#3a3a3a;"></div>
<svg class="a" style="left:813px;top:423px;" width="10" height="6" viewBox="0 0 10 6"><ellipse cx="5" cy="3" rx="4.5" ry="2.6" fill="#cfcfcf"/><circle cx="5" cy="3" r="1.6" fill="#333"/></svg>
<svg class="a" style="left:838px;top:420px;" width="11" height="12" viewBox="0 0 11 12"><path d="M1 1.5 H10 V4 M1 1.5 V4 M5.5 1.5 V11 M3 11 H8" fill="none" stroke="#dfe4ea" stroke-width="1.8"/></svg>
<div class="t" style="left:863.5px;top:422.5px;font-size:10px;color:#f0f0f0;transform:scaleX(0.9333);transform-origin:0 0;">已通过</div>
<div class="a" style="left:806px;top:441px;width:179px;height:29px;background:#4a4a4a;"></div>
<div class="a" style="left:830px;top:441px;width:155px;height:29px;background:#6d7e96;"></div>
<div class="a" style="left:806px;top:470px;width:179px;height:1px;background:#3a3a3a;"></div>
<svg class="a" style="left:813px;top:453px;" width="10" height="6" viewBox="0 0 10 6"><ellipse cx="5" cy="3" rx="4.5" ry="2.6" fill="#cfcfcf"/><circle cx="5" cy="3" r="1.6" fill="#333"/></svg>
<svg class="a" style="left:832px;top:443px" width="24" height="25" viewBox="0 0 24 25"><defs><pattern id="ck" width="5.4" height="5.4" patternUnits="userSpaceOnUse"><rect width="5.4" height="5.4" fill="#fff"/><rect width="2.7" height="2.7" fill="#cfd3cf"/><rect x="2.7" y="2.7" width="2.7" height="2.7" fill="#cfd3cf"/></pattern></defs><rect x="0" y="0" width="24" height="25" fill="url(#ck)"/><circle cx="12" cy="12.5" r="10.5" fill="#7fcf8f" fill-opacity="0.3" stroke="#5cbf70" stroke-opacity="0.55" stroke-width="2"/><circle cx="12" cy="12.5" r="7" fill="none" stroke="#5cbf70" stroke-opacity="0.3" stroke-width="1"/><rect x="0.5" y="0.5" width="23" height="24" fill="none" stroke="#1d261f" stroke-width="1"/></svg>
<div class="t" style="left:863.5px;top:452px;font-size:10px;color:#f0f0f0;transform:scaleX(0.9526);transform-origin:0 0;">图层 1</div>
<div class="a" style="left:806px;top:471px;width:179px;height:28px;background:#535353;"></div>
<div class="a" style="left:806px;top:499px;width:179px;height:1px;background:#3a3a3a;"></div>
<div class="a" style="left:829px;top:411px;width:1px;height:88px;background:#3c3c3c;"></div>
<svg class="a" style="left:813px;top:482px;" width="10" height="6" viewBox="0 0 10 6"><ellipse cx="5" cy="3" rx="4.5" ry="2.6" fill="#cfcfcf"/><circle cx="5" cy="3" r="1.6" fill="#333"/></svg>
<div class="a" style="left:832px;top:473px;width:24px;height:24px;background:#ffffff;border:1px solid #1e1e1e"></div>
<div class="t" style="left:865px;top:481.5px;font-size:10px;color:#eeeeee;transform:scaleX(0.9000);transform-origin:0 0;font-style:italic">背景</div>
<svg class="a" style="left:963px;top:480px;" width="9" height="11" viewBox="0 0 9 11"><path d="M2 5 V3 A2.5 2.5 0 0 1 7 3 V5" fill="none" stroke="#c8c8c8" stroke-width="1.2"/><rect x="1" y="5" width="7" height="5" fill="none" stroke="#c8c8c8" stroke-width="1.2"/></svg>
<div class="a" style="left:806px;top:692px;width:190px;height:1px;background:#3a3a3a;"></div>
<div class="a" style="left:806px;top:693px;width:190px;height:14px;background:#535353;"></div>
<svg class="a" style="left:842px;top:697px;" width="12" height="8" viewBox="0 0 12 8"><path d="M4 1 H2.5 A2.5 2.5 0 0 0 2.5 7 H4 M8 1 H9.5 A2.5 2.5 0 0 1 9.5 7 H8 M4 4 H8" fill="none" stroke="#d8d8d8" stroke-width="1.5"/></svg>
<div class="t" style="left:864px;top:696px;font-size:10px;color:#9a9a9a;font-family:"Liberation Serif",serif"><i>fx</i></div>
<svg class="a" style="left:884px;top:697px;" width="11" height="8" viewBox="0 0 11 8"><rect x="0" y="0" width="11" height="8" fill="#a0a0a0"/><circle cx="5.5" cy="4" r="2.2" fill="#666"/></svg>
<svg class="a" style="left:905px;top:696px;" width="10" height="10" viewBox="0 0 10 10"><circle cx="4.5" cy="4.5" r="4.2" fill="#d8d8d8"/><path d="M2 7 L7 2" stroke="#535353" stroke-width="1.3"/><rect x="9" y="8.5" width="1.5" height="1.5" fill="#ddd"/></svg>
<svg class="a" style="left:924px;top:697px;" width="10" height="8" viewBox="0 0 10 8"><path d="M0 0 H4 L5 1.5 H10 V8 H0Z" fill="#d8d8d8"/></svg>
<svg class="a" style="left:945px;top:696px;" width="10" height="10" viewBox="0 0 10 10"><path d="M3 0 H10 V9 H3 V3 H0 Z" fill="#d8d8d8"/><rect x="0.5" y="3.5" width="5" height="6" fill="none" stroke="#535353" stroke-width="1"/></svg>
<svg class="a" style="left:966px;top:696px;" width="9" height="10" viewBox="0 0 9 10"><rect x="0" y="1" width="9" height="1.5" fill="#c8c8c8"/><rect x="3" y="0" width="3" height="1.5" fill="#c8c8c8"/><path d="M1 3 H8 V10 H1Z" fill="#c8c8c8"/><path d="M3.2 4 V9 M5.8 4 V9" stroke="#535353" stroke-width="0.8"/></svg>
</body></html>
